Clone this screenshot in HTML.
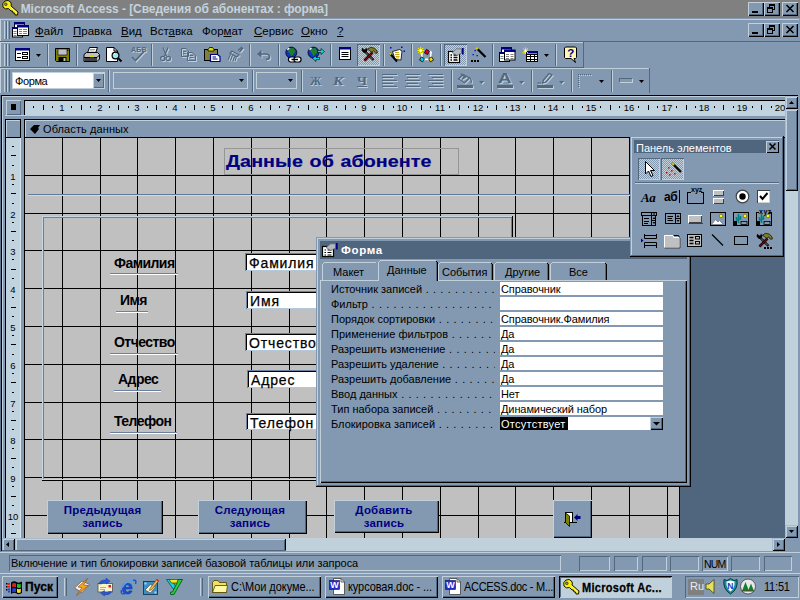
<!DOCTYPE html>
<html lang="ru"><head><meta charset="utf-8"><title>Microsoft Access</title><style>
html,body{margin:0;padding:0}
body{width:800px;height:600px;overflow:hidden;position:relative;background:#8399b1;font-family:"Liberation Sans",sans-serif;font-size:11px;color:#000}
.a{position:absolute;box-sizing:border-box;overflow:hidden}
.t{white-space:nowrap;overflow:visible;line-height:13px}
.b{font-weight:bold}
svg{position:absolute;overflow:visible}
u{text-decoration:underline}
</style></head><body>
<div class="a " style="left:0px;top:0px;width:800px;height:18px;background:#808080"></div>
<div class="a t title" style="left:20.7px;top:2px;color:#c3d3de;font-weight:bold;font-size:12px;letter-spacing:-0.06px;line-height:14px">Microsoft Access - [Сведения об абонентах : форма]</div>
<svg style="left:2px;top:0px" width="17" height="16" viewBox="0 0 17 16"><path d="M3 1 Q6.5 -0.5 8.5 2 Q10 4 9 6 L16 12 L15.5 15 L13 15 L12.5 13 L11 13 L10.5 11 L9 11 L6.5 8.5 Q3 10 1 7 Q-0.5 3.5 3 1 Z" fill="#f8f010" stroke="#101000" stroke-width="1"/><circle cx="3.8" cy="4.3" r="1.3" fill="#909090" stroke="#202000" stroke-width="0.7"/><path d="M8.5 7 L14.5 12.5" stroke="#fff8a0" stroke-width="0.8"/></svg>
<div class="a " style="left:748px;top:2px;width:16px;height:14px;background:#8399b1;box-shadow:inset 1px 1px 0 #c2d0dc,inset -1px -1px 0 #000000,inset -2px -2px 0 #52687f"></div>
<div class="a " style="left:752px;top:11px;width:6px;height:2px;background:#000"></div>
<div class="a " style="left:764px;top:2px;width:16px;height:14px;background:#8399b1;box-shadow:inset 1px 1px 0 #c2d0dc,inset -1px -1px 0 #000000,inset -2px -2px 0 #52687f"></div>
<div class="a " style="left:769px;top:4px;width:6px;height:6px;border:1px solid #000;border-top:2px solid #000"></div>
<div class="a " style="left:767px;top:7px;width:6px;height:6px;border:1px solid #000;border-top:2px solid #000;background:#8399b1"></div>
<div class="a " style="left:782px;top:2px;width:16px;height:14px;background:#8399b1;box-shadow:inset 1px 1px 0 #c2d0dc,inset -1px -1px 0 #000000,inset -2px -2px 0 #52687f"></div>
<svg style="left:786px;top:5px" width="8" height="7"><path d="M0.5 0 L7.5 7 M7.5 0 L0.5 7" stroke="#000" stroke-width="1.6" fill="none"/></svg>
<div class="a " style="left:0px;top:19px;width:799px;height:1px;background:#c2d0dc"></div>
<div class="a " style="left:0px;top:19px;width:1px;height:75px;background:#c2d0dc"></div>
<div class="a " style="left:0px;top:41px;width:800px;height:1px;background:#52687f"></div>
<div class="a " style="left:4px;top:21px;width:1px;height:18px;background:#c2d0dc"></div>
<div class="a " style="left:6px;top:21px;width:1px;height:18px;background:#52687f"></div>
<div class="a " style="left:7px;top:21px;width:1px;height:18px;background:#c2d0dc"></div>
<div class="a " style="left:9px;top:21px;width:1px;height:18px;background:#52687f"></div>
<svg style="left:12px;top:22px" width="17" height="16"><rect x="2.5" y="1" width="10" height="9" fill="#fff" stroke="#000"/><rect x="2" y="0" width="11" height="2.5" fill="#000080"/><rect x="0.5" y="6" width="10" height="9" fill="#fff" stroke="#000"/><rect x="0" y="5" width="11" height="2" fill="#000080"/><rect x="5.5" y="4" width="11" height="9.5" fill="#fff" stroke="#000"/><rect x="5" y="3" width="12" height="2.5" fill="#000080"/><path d="M7 7.5 H10 M11 7.5 H15 M7 9.5 H10 M11 9.5 H15 M7 11.5 H10 M11 11.5 H15 M1.5 9.5 H4.5 M1.5 11.5 H4.5 M1.5 13.5 H4.5" stroke="#808080" stroke-width="1"/></svg>
<div class="a t menu" style="left:35px;top:24px;font-size:11.5px;line-height:14px"><u>Ф</u>айл</div>
<div class="a t menu" style="left:73px;top:24px;font-size:11.5px;line-height:14px"><u>П</u>равка</div>
<div class="a t menu" style="left:121px;top:24px;font-size:11.5px;line-height:14px"><u>В</u>ид</div>
<div class="a t menu" style="left:150px;top:24px;font-size:11.5px;line-height:14px">Вст<u>а</u>вка</div>
<div class="a t menu" style="left:202px;top:24px;font-size:11.5px;line-height:14px">Фор<u>м</u>ат</div>
<div class="a t menu" style="left:254px;top:24px;font-size:11.5px;line-height:14px"><u>С</u>ервис</div>
<div class="a t menu" style="left:301px;top:24px;font-size:11.5px;line-height:14px"><u>О</u>кно</div>
<div class="a t menu" style="left:337px;top:24px;font-size:11.5px;line-height:14px"><u>?</u></div>
<div class="a " style="left:748px;top:23px;width:16px;height:14px;background:#8399b1;box-shadow:inset 1px 1px 0 #c2d0dc,inset -1px -1px 0 #000000,inset -2px -2px 0 #52687f"></div>
<div class="a " style="left:752px;top:32px;width:6px;height:2px;background:#000"></div>
<div class="a " style="left:764px;top:23px;width:16px;height:14px;background:#8399b1;box-shadow:inset 1px 1px 0 #c2d0dc,inset -1px -1px 0 #000000,inset -2px -2px 0 #52687f"></div>
<div class="a " style="left:769px;top:25px;width:6px;height:6px;border:1px solid #000;border-top:2px solid #000"></div>
<div class="a " style="left:767px;top:28px;width:6px;height:6px;border:1px solid #000;border-top:2px solid #000;background:#8399b1"></div>
<div class="a " style="left:782px;top:23px;width:16px;height:14px;background:#8399b1;box-shadow:inset 1px 1px 0 #c2d0dc,inset -1px -1px 0 #000000,inset -2px -2px 0 #52687f"></div>
<svg style="left:786px;top:26px" width="8" height="7"><path d="M0.5 0 L7.5 7 M7.5 0 L0.5 7" stroke="#000" stroke-width="1.6" fill="none"/></svg>
<div class="a " style="left:0px;top:42px;width:583px;height:1px;background:#c2d0dc"></div>
<div class="a " style="left:583px;top:42px;width:1px;height:26px;background:#52687f"></div>
<div class="a " style="left:0px;top:67px;width:584px;height:1px;background:#52687f"></div>
<div class="a " style="left:4px;top:44px;width:1px;height:22px;background:#c2d0dc"></div>
<div class="a " style="left:6px;top:44px;width:1px;height:22px;background:#52687f"></div>
<div class="a " style="left:7px;top:44px;width:1px;height:22px;background:#c2d0dc"></div>
<div class="a " style="left:9px;top:44px;width:1px;height:22px;background:#52687f"></div>
<div class="a " style="left:47px;top:44px;width:1px;height:22px;background:#52687f"></div>
<div class="a " style="left:48px;top:44px;width:1px;height:22px;background:#c2d0dc"></div>
<div class="a " style="left:76px;top:44px;width:1px;height:22px;background:#52687f"></div>
<div class="a " style="left:77px;top:44px;width:1px;height:22px;background:#c2d0dc"></div>
<div class="a " style="left:151px;top:44px;width:1px;height:22px;background:#52687f"></div>
<div class="a " style="left:152px;top:44px;width:1px;height:22px;background:#c2d0dc"></div>
<div class="a " style="left:249px;top:44px;width:1px;height:22px;background:#52687f"></div>
<div class="a " style="left:250px;top:44px;width:1px;height:22px;background:#c2d0dc"></div>
<div class="a " style="left:278px;top:44px;width:1px;height:22px;background:#52687f"></div>
<div class="a " style="left:279px;top:44px;width:1px;height:22px;background:#c2d0dc"></div>
<div class="a " style="left:330px;top:44px;width:1px;height:22px;background:#52687f"></div>
<div class="a " style="left:331px;top:44px;width:1px;height:22px;background:#c2d0dc"></div>
<div class="a " style="left:383px;top:44px;width:1px;height:22px;background:#52687f"></div>
<div class="a " style="left:384px;top:44px;width:1px;height:22px;background:#c2d0dc"></div>
<div class="a " style="left:411px;top:44px;width:1px;height:22px;background:#52687f"></div>
<div class="a " style="left:412px;top:44px;width:1px;height:22px;background:#c2d0dc"></div>
<div class="a " style="left:440px;top:44px;width:1px;height:22px;background:#52687f"></div>
<div class="a " style="left:441px;top:44px;width:1px;height:22px;background:#c2d0dc"></div>
<div class="a " style="left:492px;top:44px;width:1px;height:22px;background:#52687f"></div>
<div class="a " style="left:493px;top:44px;width:1px;height:22px;background:#c2d0dc"></div>
<div class="a " style="left:555px;top:44px;width:1px;height:22px;background:#52687f"></div>
<div class="a " style="left:556px;top:44px;width:1px;height:22px;background:#c2d0dc"></div>
<svg style="left:15px;top:48px" width="15" height="13"><rect x="0.5" y="0.5" width="14" height="12" fill="#fff" stroke="#000"/><rect x="0" y="0" width="15" height="2.5" fill="#000080"/><path d="M2 5.5 H6 M2 9.5 H6" stroke="#000"/><rect x="7.5" y="4.5" width="5" height="2" fill="none" stroke="#000"/><rect x="7.5" y="8.5" width="5" height="2" fill="none" stroke="#000"/></svg>
<svg style="left:36px;top:54px" width="5" height="3"><polygon points="0,0 5,0 2.5,3" fill="#000"/></svg>
<svg style="left:55px;top:48px" width="15" height="14"><path d="M0.5 0.5 H14.5 V13.5 H1.5 L0.5 12.5 Z" fill="#808000" stroke="#000"/><rect x="3" y="1" width="9" height="6" fill="#c0c0c0" stroke="#000" stroke-width="0.6"/><rect x="3.5" y="9" width="8" height="4.5" fill="#000"/><rect x="8.5" y="10" width="2" height="3" fill="#c0c0c0"/><rect x="12.3" y="1.5" width="1" height="1.5" fill="#000"/></svg>
<svg style="left:83px;top:47px" width="17" height="15"><path d="M4.5 6 L6.5 0.5 H14.5 L12.5 6 Z" fill="#fff" stroke="#000"/><path d="M1 7.5 L3.5 5.5 H14.5 L16.5 7.5 V12 L14 14.5 H1 Z" fill="#c0c0c0" stroke="#000"/><path d="M1 10.5 H14 L16.5 8" stroke="#000" fill="none"/><rect x="1.5" y="11" width="12.5" height="3" fill="#404040"/><rect x="7" y="9" width="4" height="1.2" fill="#e0e000"/><path d="M7 2.5 H12 M6.5 4 H11.5" stroke="#808080" stroke-width="0.7"/></svg>
<svg style="left:106px;top:47px" width="17" height="16"><path d="M0.5 0.5 H8 L11.5 4 V14.5 H0.5 Z" fill="#fff" stroke="#000"/><path d="M8 0.5 V4 H11.5" fill="none" stroke="#000"/><circle cx="9.5" cy="8.5" r="3.4" fill="#a0e8f0" stroke="#000" stroke-width="1.2"/><path d="M12 11 L15.5 14.5" stroke="#000" stroke-width="2"/><path d="M8 7 L9 6.4" stroke="#fff" stroke-width="1"/></svg>
<div class="a t" style="left:131px;top:46px;font-size:7px;line-height:8px;font-weight:bold;color:#52687f;text-shadow:1px 1px 0 #c2d0dc;letter-spacing:0.2px">АБВ</div>
<svg style="left:130px;top:48px" width="17" height="15"><g transform="translate(1,1)" stroke="#c2d0dc" fill="#c2d0dc" color="#c2d0dc"><path d="M2 9 L5.5 12.5 L14.5 3" fill="none" stroke="currentColor" stroke-width="1.6"/></g><g stroke="#52687f" fill="#52687f" color="#52687f"><path d="M2 9 L5.5 12.5 L14.5 3" fill="none" stroke="currentColor" stroke-width="1.6"/></g></svg>
<svg style="left:160px;top:47px" width="12" height="16"><g transform="translate(1,1)" stroke="#c2d0dc" fill="#c2d0dc" color="#c2d0dc"><path d="M3 0.5 L6.5 9 M8 0.5 L4.5 9" fill="none" stroke="currentColor" stroke-width="1.2"/><circle cx="2.8" cy="11.5" r="2.2" fill="none" stroke="currentColor" stroke-width="1.2"/><circle cx="8.2" cy="11.5" r="2.2" fill="none" stroke="currentColor" stroke-width="1.2"/></g><g stroke="#52687f" fill="#52687f" color="#52687f"><path d="M3 0.5 L6.5 9 M8 0.5 L4.5 9" fill="none" stroke="currentColor" stroke-width="1.2"/><circle cx="2.8" cy="11.5" r="2.2" fill="none" stroke="currentColor" stroke-width="1.2"/><circle cx="8.2" cy="11.5" r="2.2" fill="none" stroke="currentColor" stroke-width="1.2"/></g></svg>
<svg style="left:181px;top:48px" width="16" height="14"><g transform="translate(1,1)" stroke="#c2d0dc" fill="#c2d0dc" color="#c2d0dc"><path d="M0.5 0.5 H5 L7.5 3 V8.5 H0.5 Z M6.5 4.5 H11 L14.5 7.5 V12.5 H6.5 Z" fill="none" stroke="currentColor"/><path d="M2 3.5 H5 M2 5.5 H5 M8.5 7.5 H12 M8.5 9.5 H12.5" fill="none" stroke="currentColor" stroke-width="0.9"/></g><g stroke="#52687f" fill="#52687f" color="#52687f"><path d="M0.5 0.5 H5 L7.5 3 V8.5 H0.5 Z M6.5 4.5 H11 L14.5 7.5 V12.5 H6.5 Z" fill="none" stroke="currentColor"/><path d="M2 3.5 H5 M2 5.5 H5 M8.5 7.5 H12 M8.5 9.5 H12.5" fill="none" stroke="currentColor" stroke-width="0.9"/></g></svg>
<svg style="left:204px;top:47px" width="17" height="15"><rect x="0.5" y="2.5" width="13" height="11" fill="#808040" stroke="#000"/><path d="M4 2.5 L5.5 0.5 H8.5 L10 2.5 V4 H4 Z" fill="#e0e000" stroke="#000" stroke-width="0.8"/><path d="M6.5 7.5 H13.5 L16 9.5 V14.5 H6.5 Z" fill="#fff" stroke="#000080" stroke-width="1.2"/><path d="M8.5 10 H12 M8.5 12 H13.5" stroke="#000080" stroke-width="1"/></svg>
<svg style="left:227px;top:47px" width="17" height="16"><g transform="translate(1,1)" stroke="#c2d0dc" fill="#c2d0dc" color="#c2d0dc"><path d="M11 3.5 L14.5 0.5 L15.5 1.5 L12.5 5" fill="none" stroke="currentColor" stroke-width="1.6"/><path d="M5 4 L12 8 L9.5 10 L3 6 Z" fill="none" stroke="currentColor" stroke-width="1.2"/><path d="M3.5 7 L1 13 M5.5 8 L3.5 13.5 M7.5 9.5 L6 14 M9 10.5 L8 14" fill="none" stroke="currentColor" stroke-width="1"/></g><g stroke="#52687f" fill="#52687f" color="#52687f"><path d="M11 3.5 L14.5 0.5 L15.5 1.5 L12.5 5" fill="none" stroke="currentColor" stroke-width="1.6"/><path d="M5 4 L12 8 L9.5 10 L3 6 Z" fill="none" stroke="currentColor" stroke-width="1.2"/><path d="M3.5 7 L1 13 M5.5 8 L3.5 13.5 M7.5 9.5 L6 14 M9 10.5 L8 14" fill="none" stroke="currentColor" stroke-width="1"/></g></svg>
<svg style="left:257px;top:50px" width="15" height="11"><g transform="translate(1,1)" stroke="#c2d0dc" fill="#c2d0dc" color="#c2d0dc"><path d="M2 4 H8.5 Q12.5 4 12.5 7 Q12.5 9.5 9 9.5" fill="none" stroke="currentColor" stroke-width="1.6"/><polygon points="0,4 4.5,0 4.5,8" stroke="none"/></g><g stroke="#52687f" fill="#52687f" color="#52687f"><path d="M2 4 H8.5 Q12.5 4 12.5 7 Q12.5 9.5 9 9.5" fill="none" stroke="currentColor" stroke-width="1.6"/><polygon points="0,4 4.5,0 4.5,8" stroke="none"/></g></svg>
<svg style="left:285px;top:46px" width="17" height="17"><circle cx="6.3" cy="6.6" r="5.5" fill="#1030d0" stroke="#000" stroke-width="0.8"/><path d="M4.3 2.5999999999999996 L8.3 2.0999999999999996 L10.3 5.6 L8.3 8.6 L6.3 10.6 L4.8 7.6 L2.8 5.6 Z" fill="#208020"/><path d="M2.3 3.5999999999999996 L4.3 2.0999999999999996" stroke="#fff" stroke-width="1.4"/><rect x="3.5" y="11" width="7" height="5" rx="2.2" fill="#fff" stroke="#000" stroke-width="1.2"/><rect x="9" y="11" width="7" height="5" rx="2.2" fill="#fff" stroke="#000" stroke-width="1.2"/><path d="M6.5 13.5 H13" stroke="#000" stroke-width="1.4"/></svg>
<svg style="left:307px;top:46px" width="18" height="17"><circle cx="6.5" cy="6.6" r="5.5" fill="#1030d0" stroke="#000" stroke-width="0.8"/><path d="M4.5 2.5999999999999996 L8.5 2.0999999999999996 L10.5 5.6 L8.5 8.6 L6.5 10.6 L5.0 7.6 L3.0 5.6 Z" fill="#208020"/><path d="M2.5 3.5999999999999996 L4.5 2.0999999999999996" stroke="#fff" stroke-width="1.4"/><path d="M10.5 4.5 H14 V2.5 L17.5 5.5 L14 8.5 V6.5 H10.5 Z" fill="#00e0e8" stroke="#000" stroke-width="0.6"/><path d="M12.5 11.5 H9 V9.5 L5.5 12.5 L9 15.5 V13.5 H12.5 Z" fill="#00e0e8" stroke="#000" stroke-width="0.6"/></svg>
<svg style="left:339px;top:47px" width="12" height="13"><rect x="0.5" y="0.5" width="11" height="12" fill="#fff" stroke="#000"/><rect x="0" y="0" width="12" height="2.5" fill="#000080"/><path d="M2.5 5.5 H9.5 M2.5 7.5 H9.5 M2.5 9.5 H9.5" stroke="#000" stroke-width="1"/></svg>
<div class="a " style="left:357px;top:44px;width:23px;height:22px;background:conic-gradient(#c2d0dc 25%,#8399b1 0 50%,#c2d0dc 0 75%,#8399b1 0) 0 0/2px 2px;box-shadow:inset 1px 1px 0 #52687f,inset -1px -1px 0 #c2d0dc"></div>
<svg style="left:361px;top:47px" width="17" height="16"><path d="M3.5 4 L12.5 13" stroke="#000" stroke-width="2.4"/><path d="M4 4.5 L12 12.5" stroke="#c0c0c0" stroke-width="0.7"/><path d="M0.5 3.2 L1.3 0.8 L3 2.6 L4.6 2.2 L4.8 0.4 L6.6 2.4 L5.4 5.6 L2.6 5.8 Z" fill="#000"/><path d="M11.5 5.5 L3.5 13.5" stroke="#000" stroke-width="2.6"/><path d="M11.5 5.5 L3.5 13.5" stroke="#900000" stroke-width="1.2"/><path d="M6.5 2.2 L9.5 0.3 L13.5 1.2 L16 4 L16.3 6 L14.5 6.3 L12.8 3.8 L11 5.4 L8.5 3.6 Z" fill="#808020" stroke="#000" stroke-width="0.7"/></svg>
<svg style="left:389px;top:46px" width="17" height="17"><path d="M3.5 5.5 L10.5 3.5 L13 5 L12 14 L6 13.5 Z" fill="#fff" stroke="#000" stroke-width="0.8"/><path d="M6 6.5 H10 M6 8.5 H10.5 M6.5 10.5 H10.5 M7 12 H10" stroke="#c0a000" stroke-width="0.9"/><path d="M0.5 7 L8 15.5" stroke="#000" stroke-width="2"/><path d="M0.5 7 L2 8.7" stroke="#e0d000" stroke-width="2"/><g fill="#0000e0"><rect x="1" y="1" width="1.5" height="1.5"/><rect x="12" y="0.5" width="1.5" height="1.5"/><rect x="14.5" y="4.5" width="1.5" height="1.5"/></g></svg>
<svg style="left:417px;top:46px" width="17" height="17"><path d="M5 7 V13.5 H14 V6.5 Q14 5.5 12.5 5.5 H11" fill="none" stroke="#fff" stroke-width="1.8"/><path d="M5 7 V13.5 H14 V6.5" fill="none" stroke="#808080" stroke-width="0.5" transform="translate(0.9,0.9)"/><path d="M0.5 4.5 H7 M3.7 1 V8.5 M1.2 2 L6.2 7 M6.2 2 L1.2 7" stroke="#f8f000" stroke-width="1"/><path d="M2.5 4.5 H5 M3.7 3 V6" stroke="#fff" stroke-width="1.2"/><rect x="8.2" y="4" width="3.6" height="4" fill="#e00018" stroke="#000" stroke-width="0.7" transform="rotate(30 10 6)"/><rect x="3.2" y="11.6" width="3.6" height="3.6" fill="#00d8e8" stroke="#000" stroke-width="0.7" transform="rotate(30 5 13.4)"/><rect x="12.3" y="11.6" width="3.6" height="3.6" fill="#f0e000" stroke="#000" stroke-width="0.7" transform="rotate(-30 14.1 13.4)"/></svg>
<div class="a " style="left:444px;top:44px;width:23px;height:22px;background:conic-gradient(#c2d0dc 25%,#8399b1 0 50%,#c2d0dc 0 75%,#8399b1 0) 0 0/2px 2px;box-shadow:inset 1px 1px 0 #52687f,inset -1px -1px 0 #c2d0dc"></div>
<svg style="left:448px;top:48px" width="17" height="15"><rect x="0.5" y="3.5" width="11" height="11" fill="#fff" stroke="#000" stroke-width="1.2"/><path d="M2.5 7 H4 M5.5 7 H9.5 M2.5 9.5 H4 M5.5 9.5 H9.5 M2.5 12 H4 M5.5 12 H9.5" stroke="#000" stroke-width="1.3"/><path d="M4 4.5 L8.5 0.8 H13.5 V5 L9 7.5 Z" fill="#b0b8c0" stroke="#606060" stroke-width="0.7"/><path d="M14.8 0 V6.5" stroke="#000080" stroke-width="1.8"/></svg>
<svg style="left:470px;top:47px" width="17" height="16"><path d="M7 1.5 L15.5 10" stroke="#000" stroke-width="2.2"/><path d="M6.2 0.7 L7.8 2.3" stroke="#e0d000" stroke-width="2.2"/><g fill="#0000e0"><rect x="4.5" y="3" width="1.3" height="1.3"/><rect x="2.5" y="7" width="1.3" height="1.3"/><rect x="6.5" y="8" width="1.3" height="1.3"/></g><g fill="#000"><rect x="1" y="13" width="2" height="2"/><rect x="4" y="13" width="2" height="2"/><rect x="7" y="13" width="2" height="2"/></g></svg>
<svg style="left:499px;top:47px" width="17" height="15"><rect x="2.5" y="1" width="10" height="9" fill="#fff" stroke="#000"/><rect x="2" y="0" width="11" height="2.5" fill="#000080"/><rect x="0.5" y="6" width="10" height="8.5" fill="#fff" stroke="#000"/><rect x="0" y="5" width="11" height="2" fill="#000080"/><rect x="5.5" y="3.5" width="10.5" height="9.5" fill="#fff" stroke="#000"/><rect x="5" y="2.5" width="11.5" height="2.5" fill="#000080"/><path d="M7 7.5 H10 M11.5 7.5 H14.5 M7 9.5 H10 M11.5 9.5 H14.5 M7 11.5 H10 M11.5 11.5 H14.5 M1.5 9.5 H4.5 M1.5 11.5 H4.5" stroke="#808080" stroke-width="1"/></svg>
<svg style="left:522px;top:47px" width="17" height="15"><rect x="4.5" y="5" width="11" height="9.5" fill="#fff" stroke="#000"/><rect x="4" y="4" width="12" height="2.5" fill="#000080"/><path d="M8.5 7 V14 M12.5 7 V14 M5 9.5 H15 M5 12.5 H15 M5 7.5 H15" stroke="#000" stroke-width="1"/><path d="M0.5 5.5 L6 3 M3.5 0.5 V7 M1 1.5 L6 6 M6 1 L1.5 7" stroke="#f0e000" stroke-width="1"/><path d="M3.5 2.5 V5.5 M2 4 H5" stroke="#fff" stroke-width="1"/></svg>
<svg style="left:544px;top:54px" width="5" height="3"><polygon points="0,0 5,0 2.5,3" fill="#000"/></svg>
<svg style="left:564px;top:46px" width="14" height="18"><path d="M1.5 1 H11.5 L12.5 2 V11.5 L11.5 12.5 H10 L11.5 16.5 L7 12.5 H1.5 L0.5 11.5 V2 Z" fill="#fff8b0" stroke="#000" stroke-width="1"/><text x="3.2" y="11" font-family="Liberation Sans,sans-serif" font-weight="bold" font-size="11.5" fill="#000080" stroke="none">?</text></svg>
<div class="a " style="left:0px;top:68px;width:649px;height:1px;background:#c2d0dc"></div>
<div class="a " style="left:649px;top:68px;width:1px;height:26px;background:#52687f"></div>
<div class="a " style="left:0px;top:93px;width:650px;height:1px;background:#52687f"></div>
<div class="a " style="left:0px;top:94px;width:800px;height:1px;background:#52687f"></div>
<div class="a " style="left:4px;top:70px;width:1px;height:22px;background:#c2d0dc"></div>
<div class="a " style="left:6px;top:70px;width:1px;height:22px;background:#52687f"></div>
<div class="a " style="left:7px;top:70px;width:1px;height:22px;background:#c2d0dc"></div>
<div class="a " style="left:9px;top:70px;width:1px;height:22px;background:#52687f"></div>
<div class="a " style="left:12px;top:72px;width:93px;height:17px;background:#fff;border:1px solid #c2d0dc"></div>
<div class="a " style="left:93px;top:73px;width:11px;height:15px;background:#8399b1;box-shadow:inset 1px 1px 0 #c2d0dc,inset -1px -1px 0 #52687f"></div>
<svg style="left:96px;top:79px" width="5" height="3"><polygon points="0,0 5,0 2.5,3" fill="#000"/></svg>
<div class="a t cmb" style="left:15px;top:74px;font-size:11px;line-height:14px;letter-spacing:-0.4px">Форма</div>
<div class="a " style="left:108px;top:70px;width:1px;height:22px;background:#52687f"></div>
<div class="a " style="left:109px;top:70px;width:1px;height:22px;background:#c2d0dc"></div>
<div class="a " style="left:252px;top:70px;width:1px;height:22px;background:#52687f"></div>
<div class="a " style="left:253px;top:70px;width:1px;height:22px;background:#c2d0dc"></div>
<div class="a " style="left:301px;top:70px;width:1px;height:22px;background:#52687f"></div>
<div class="a " style="left:302px;top:70px;width:1px;height:22px;background:#c2d0dc"></div>
<div class="a " style="left:375px;top:70px;width:1px;height:22px;background:#52687f"></div>
<div class="a " style="left:376px;top:70px;width:1px;height:22px;background:#c2d0dc"></div>
<div class="a " style="left:451px;top:70px;width:1px;height:22px;background:#52687f"></div>
<div class="a " style="left:452px;top:70px;width:1px;height:22px;background:#c2d0dc"></div>
<div class="a " style="left:491px;top:70px;width:1px;height:22px;background:#52687f"></div>
<div class="a " style="left:492px;top:70px;width:1px;height:22px;background:#c2d0dc"></div>
<div class="a " style="left:531px;top:70px;width:1px;height:22px;background:#52687f"></div>
<div class="a " style="left:532px;top:70px;width:1px;height:22px;background:#c2d0dc"></div>
<div class="a " style="left:571px;top:70px;width:1px;height:22px;background:#52687f"></div>
<div class="a " style="left:572px;top:70px;width:1px;height:22px;background:#c2d0dc"></div>
<div class="a " style="left:611px;top:70px;width:1px;height:22px;background:#52687f"></div>
<div class="a " style="left:612px;top:70px;width:1px;height:22px;background:#c2d0dc"></div>
<div class="a " style="left:113px;top:72px;width:135px;height:17px;border:1px solid #c2d0dc"></div>
<svg style="left:239px;top:79px" width="5" height="3"><polygon points="0,0 5,0 2.5,3" fill="#000"/></svg>
<div class="a " style="left:256px;top:72px;width:41px;height:17px;border:1px solid #c2d0dc"></div>
<svg style="left:288px;top:79px" width="5" height="3"><polygon points="0,0 5,0 2.5,3" fill="#000"/></svg>
<div class="a t" style="left:310px;top:74px;font-family:'Liberation Serif',serif;font-size:13.5px;line-height:14px;font-weight:bold;color:#52687f;text-shadow:1px 1px 0 #c2d0dc;letter-spacing:-1px;transform:scaleX(0.85);transform-origin:0 0">Ж</div>
<div class="a t" style="left:333px;top:74px;font-family:'Liberation Serif',serif;font-size:13.5px;line-height:14px;font-weight:bold;color:#52687f;text-shadow:1px 1px 0 #c2d0dc;font-style:italic;transform:scaleX(1.15);transform-origin:0 0">К</div>
<div class="a t" style="left:357px;top:74px;font-family:'Liberation Serif',serif;font-size:13.5px;line-height:14px;font-weight:bold;color:#52687f;text-shadow:1px 1px 0 #c2d0dc;">Ч</div>
<div class="a " style="left:357px;top:86px;width:10px;height:1px;background:#52687f"></div>
<div class="a " style="left:358px;top:87px;width:10px;height:1px;background:#c2d0dc"></div>
<svg style="left:382px;top:74px" width="16" height="14"><g transform="translate(1,1)" stroke="#c2d0dc" fill="#c2d0dc" color="#c2d0dc"><rect x="0" y="0" width="15" height="1" stroke="none"/><rect x="0" y="3" width="11" height="1" stroke="none"/><rect x="0" y="6" width="15" height="1" stroke="none"/><rect x="0" y="9" width="11" height="1" stroke="none"/><rect x="0" y="12" width="15" height="1" stroke="none"/></g><g stroke="#52687f" fill="#52687f" color="#52687f"><rect x="0" y="0" width="15" height="1" stroke="none"/><rect x="0" y="3" width="11" height="1" stroke="none"/><rect x="0" y="6" width="15" height="1" stroke="none"/><rect x="0" y="9" width="11" height="1" stroke="none"/><rect x="0" y="12" width="15" height="1" stroke="none"/></g></svg>
<svg style="left:405px;top:74px" width="16" height="14"><g transform="translate(1,1)" stroke="#c2d0dc" fill="#c2d0dc" color="#c2d0dc"><rect x="0.0" y="0" width="15" height="1" stroke="none"/><rect x="2.0" y="3" width="11" height="1" stroke="none"/><rect x="0.0" y="6" width="15" height="1" stroke="none"/><rect x="2.0" y="9" width="11" height="1" stroke="none"/><rect x="0.0" y="12" width="15" height="1" stroke="none"/></g><g stroke="#52687f" fill="#52687f" color="#52687f"><rect x="0.0" y="0" width="15" height="1" stroke="none"/><rect x="2.0" y="3" width="11" height="1" stroke="none"/><rect x="0.0" y="6" width="15" height="1" stroke="none"/><rect x="2.0" y="9" width="11" height="1" stroke="none"/><rect x="0.0" y="12" width="15" height="1" stroke="none"/></g></svg>
<svg style="left:428px;top:74px" width="16" height="14"><g transform="translate(1,1)" stroke="#c2d0dc" fill="#c2d0dc" color="#c2d0dc"><rect x="0" y="0" width="15" height="1" stroke="none"/><rect x="4" y="3" width="11" height="1" stroke="none"/><rect x="0" y="6" width="15" height="1" stroke="none"/><rect x="4" y="9" width="11" height="1" stroke="none"/><rect x="0" y="12" width="15" height="1" stroke="none"/></g><g stroke="#52687f" fill="#52687f" color="#52687f"><rect x="0" y="0" width="15" height="1" stroke="none"/><rect x="4" y="3" width="11" height="1" stroke="none"/><rect x="0" y="6" width="15" height="1" stroke="none"/><rect x="4" y="9" width="11" height="1" stroke="none"/><rect x="0" y="12" width="15" height="1" stroke="none"/></g></svg>
<svg style="left:457px;top:73px" width="17" height="12"><g transform="translate(1,1)" stroke="#c2d0dc" fill="#c2d0dc" color="#c2d0dc"><path d="M6 1.5 L12.5 5 L7.5 10 L1.5 6 Z" fill="none" stroke="currentColor" stroke-width="1.3"/><path d="M4 0.5 L8 4.5 M12.5 5 Q15 6.5 14 10" fill="none" stroke="currentColor" stroke-width="1.2"/><path d="M5 6 L9 3.5" fill="none" stroke="currentColor" stroke-width="1.5"/></g><g stroke="#52687f" fill="#52687f" color="#52687f"><path d="M6 1.5 L12.5 5 L7.5 10 L1.5 6 Z" fill="none" stroke="currentColor" stroke-width="1.3"/><path d="M4 0.5 L8 4.5 M12.5 5 Q15 6.5 14 10" fill="none" stroke="currentColor" stroke-width="1.2"/><path d="M5 6 L9 3.5" fill="none" stroke="currentColor" stroke-width="1.5"/></g></svg>
<div class="a " style="left:457px;top:85px;width:16px;height:3px;background:#52687f"></div>
<div class="a " style="left:458px;top:88px;width:16px;height:1px;background:#c2d0dc"></div>
<div class="a " style="left:473px;top:86px;width:1px;height:3px;background:#c2d0dc"></div>
<svg style="left:479px;top:81px" width="6" height="4"><g transform="translate(1,1)" stroke="#c2d0dc" fill="#c2d0dc" color="#c2d0dc"><polygon points="0,0 5,0 2.5,3" stroke="none"/></g><g stroke="#52687f" fill="#52687f" color="#52687f"><polygon points="0,0 5,0 2.5,3" stroke="none"/></g></svg>
<div class="a t" style="left:498px;top:70px;font-size:15px;line-height:16px;font-weight:bold;color:#52687f;text-shadow:1px 1px 0 #c2d0dc;transform:scaleX(1.25);transform-origin:0 0">A</div>
<div class="a " style="left:497px;top:85px;width:16px;height:3px;background:#52687f"></div>
<div class="a " style="left:498px;top:88px;width:16px;height:1px;background:#c2d0dc"></div>
<div class="a " style="left:513px;top:86px;width:1px;height:3px;background:#c2d0dc"></div>
<svg style="left:519px;top:81px" width="6" height="4"><g transform="translate(1,1)" stroke="#c2d0dc" fill="#c2d0dc" color="#c2d0dc"><polygon points="0,0 5,0 2.5,3" stroke="none"/></g><g stroke="#52687f" fill="#52687f" color="#52687f"><polygon points="0,0 5,0 2.5,3" stroke="none"/></g></svg>
<svg style="left:537px;top:73px" width="17" height="12"><g transform="translate(1,1)" stroke="#c2d0dc" fill="#c2d0dc" color="#c2d0dc"><path d="M12 0.5 L15 2 L9 9 L5.5 10 L6.5 7 Z" fill="none" stroke="currentColor" stroke-width="1.3"/><path d="M0.5 10 H4" stroke="currentColor" stroke-width="1.2" fill="none"/></g><g stroke="#52687f" fill="#52687f" color="#52687f"><path d="M12 0.5 L15 2 L9 9 L5.5 10 L6.5 7 Z" fill="none" stroke="currentColor" stroke-width="1.3"/><path d="M0.5 10 H4" stroke="currentColor" stroke-width="1.2" fill="none"/></g></svg>
<div class="a " style="left:537px;top:85px;width:16px;height:3px;background:#52687f"></div>
<div class="a " style="left:538px;top:88px;width:16px;height:1px;background:#c2d0dc"></div>
<div class="a " style="left:553px;top:86px;width:1px;height:3px;background:#c2d0dc"></div>
<svg style="left:559px;top:81px" width="6" height="4"><g transform="translate(1,1)" stroke="#c2d0dc" fill="#c2d0dc" color="#c2d0dc"><polygon points="0,0 5,0 2.5,3" stroke="none"/></g><g stroke="#52687f" fill="#52687f" color="#52687f"><polygon points="0,0 5,0 2.5,3" stroke="none"/></g></svg>
<svg style="left:578px;top:74px" width="15" height="14"><g transform="translate(1,1)" stroke="#c2d0dc" fill="#c2d0dc" color="#c2d0dc"><path d="M0 0.5 H14" fill="none" stroke="currentColor" stroke-dasharray="1 1" shape-rendering="crispEdges"/><path d="M0.5 0 V14" fill="none" stroke="currentColor" stroke-dasharray="1 1" shape-rendering="crispEdges"/></g><g stroke="#52687f" fill="#52687f" color="#52687f"><path d="M0 0.5 H14" fill="none" stroke="currentColor" stroke-dasharray="1 1" shape-rendering="crispEdges"/><path d="M0.5 0 V14" fill="none" stroke="currentColor" stroke-dasharray="1 1" shape-rendering="crispEdges"/></g></svg>
<svg style="left:599px;top:80px" width="5" height="3"><polygon points="0,0 5,0 2.5,3" fill="#000"/></svg>
<div class="a " style="left:619px;top:78px;width:14px;height:5px;box-shadow:inset 1px 1px 0 #52687f,inset -1px -1px 0 #c2d0dc;background:#8399b1"></div>
<div class="a " style="left:619px;top:78px;width:14px;height:5px;border:1px solid #c2d0dc;border-top-color:#52687f;border-left-color:#52687f"></div>
<svg style="left:639px;top:80px" width="5" height="3"><polygon points="0,0 5,0 2.5,3" fill="#000"/></svg>
<div class="a " style="left:0px;top:93px;width:800px;height:460px;background:#8399b1"></div>
<div class="a " style="left:1px;top:95px;width:797px;height:1px;background:#000"></div>
<div class="a " style="left:1px;top:95px;width:1px;height:456px;background:#000"></div>
<div class="a " style="left:2px;top:96px;width:795px;height:1px;background:#c2d0dc"></div>
<div class="a " style="left:2px;top:96px;width:1px;height:455px;background:#c2d0dc"></div>
<div class="a " style="left:0px;top:552px;width:800px;height:1px;background:#c2d0dc"></div>
<div class="a " style="left:0px;top:95px;width:1px;height:457px;background:#607890"></div>
<div class="a " style="left:6px;top:100px;width:15px;height:15px;background:#8399b1;box-shadow:inset 1px 1px 0 #c2d0dc,inset -1px -1px 0 #52687f"></div>
<div class="a " style="left:11px;top:104px;width:5px;height:6px;background:#000"></div>
<div class="a " style="left:5px;top:115px;width:780px;height:1px;background:#c2d0dc"></div>
<div class="a " style="left:25px;top:101px;width:760px;height:14px;background:#c1d3df"></div>
<div class="a " style="left:24px;top:100px;width:761px;height:1px;background:#000"></div>
<div class="a " style="left:24px;top:100px;width:1px;height:15px;background:#000"></div>
<div class="a " style="left:33px;top:106px;width:1px;height:2px;background:#000"></div>
<div class="a " style="left:43px;top:105px;width:1px;height:5px;background:#000"></div>
<div class="a " style="left:52px;top:106px;width:1px;height:2px;background:#000"></div>
<div class="a t " style="left:59px;top:102px;font-size:9.5px;width:6px;text-align:center;line-height:11px">1</div>
<div class="a " style="left:71px;top:106px;width:1px;height:2px;background:#000"></div>
<div class="a " style="left:81px;top:105px;width:1px;height:5px;background:#000"></div>
<div class="a " style="left:90px;top:106px;width:1px;height:2px;background:#000"></div>
<div class="a t " style="left:97px;top:102px;font-size:9.5px;width:6px;text-align:center;line-height:11px">2</div>
<div class="a " style="left:109px;top:106px;width:1px;height:2px;background:#000"></div>
<div class="a " style="left:118px;top:105px;width:1px;height:5px;background:#000"></div>
<div class="a " style="left:128px;top:106px;width:1px;height:2px;background:#000"></div>
<div class="a t " style="left:134px;top:102px;font-size:9.5px;width:6px;text-align:center;line-height:11px">3</div>
<div class="a " style="left:147px;top:106px;width:1px;height:2px;background:#000"></div>
<div class="a " style="left:156px;top:105px;width:1px;height:5px;background:#000"></div>
<div class="a " style="left:166px;top:106px;width:1px;height:2px;background:#000"></div>
<div class="a t " style="left:172px;top:102px;font-size:9.5px;width:6px;text-align:center;line-height:11px">4</div>
<div class="a " style="left:185px;top:106px;width:1px;height:2px;background:#000"></div>
<div class="a " style="left:194px;top:105px;width:1px;height:5px;background:#000"></div>
<div class="a " style="left:204px;top:106px;width:1px;height:2px;background:#000"></div>
<div class="a t " style="left:210px;top:102px;font-size:9.5px;width:6px;text-align:center;line-height:11px">5</div>
<div class="a " style="left:222px;top:106px;width:1px;height:2px;background:#000"></div>
<div class="a " style="left:232px;top:105px;width:1px;height:5px;background:#000"></div>
<div class="a " style="left:241px;top:106px;width:1px;height:2px;background:#000"></div>
<div class="a t " style="left:248px;top:102px;font-size:9.5px;width:6px;text-align:center;line-height:11px">6</div>
<div class="a " style="left:260px;top:106px;width:1px;height:2px;background:#000"></div>
<div class="a " style="left:270px;top:105px;width:1px;height:5px;background:#000"></div>
<div class="a " style="left:279px;top:106px;width:1px;height:2px;background:#000"></div>
<div class="a t " style="left:286px;top:102px;font-size:9.5px;width:6px;text-align:center;line-height:11px">7</div>
<div class="a " style="left:298px;top:106px;width:1px;height:2px;background:#000"></div>
<div class="a " style="left:308px;top:105px;width:1px;height:5px;background:#000"></div>
<div class="a " style="left:317px;top:106px;width:1px;height:2px;background:#000"></div>
<div class="a t " style="left:323px;top:102px;font-size:9.5px;width:6px;text-align:center;line-height:11px">8</div>
<div class="a " style="left:336px;top:106px;width:1px;height:2px;background:#000"></div>
<div class="a " style="left:345px;top:105px;width:1px;height:5px;background:#000"></div>
<div class="a " style="left:355px;top:106px;width:1px;height:2px;background:#000"></div>
<div class="a t " style="left:361px;top:102px;font-size:9.5px;width:6px;text-align:center;line-height:11px">9</div>
<div class="a " style="left:374px;top:106px;width:1px;height:2px;background:#000"></div>
<div class="a " style="left:383px;top:105px;width:1px;height:5px;background:#000"></div>
<div class="a " style="left:393px;top:106px;width:1px;height:2px;background:#000"></div>
<div class="a t " style="left:396px;top:102px;font-size:9.5px;width:12px;text-align:center;line-height:11px">10</div>
<div class="a " style="left:411px;top:106px;width:1px;height:2px;background:#000"></div>
<div class="a " style="left:421px;top:105px;width:1px;height:5px;background:#000"></div>
<div class="a " style="left:430px;top:106px;width:1px;height:2px;background:#000"></div>
<div class="a t " style="left:434px;top:102px;font-size:9.5px;width:12px;text-align:center;line-height:11px">11</div>
<div class="a " style="left:449px;top:106px;width:1px;height:2px;background:#000"></div>
<div class="a " style="left:459px;top:105px;width:1px;height:5px;background:#000"></div>
<div class="a " style="left:468px;top:106px;width:1px;height:2px;background:#000"></div>
<div class="a t " style="left:472px;top:102px;font-size:9.5px;width:12px;text-align:center;line-height:11px">12</div>
<div class="a " style="left:487px;top:106px;width:1px;height:2px;background:#000"></div>
<div class="a " style="left:496px;top:105px;width:1px;height:5px;background:#000"></div>
<div class="a " style="left:506px;top:106px;width:1px;height:2px;background:#000"></div>
<div class="a t " style="left:509px;top:102px;font-size:9.5px;width:12px;text-align:center;line-height:11px">13</div>
<div class="a " style="left:525px;top:106px;width:1px;height:2px;background:#000"></div>
<div class="a " style="left:534px;top:105px;width:1px;height:5px;background:#000"></div>
<div class="a " style="left:544px;top:106px;width:1px;height:2px;background:#000"></div>
<div class="a t " style="left:547px;top:102px;font-size:9.5px;width:12px;text-align:center;line-height:11px">14</div>
<div class="a " style="left:563px;top:106px;width:1px;height:2px;background:#000"></div>
<div class="a " style="left:572px;top:105px;width:1px;height:5px;background:#000"></div>
<div class="a " style="left:582px;top:106px;width:1px;height:2px;background:#000"></div>
<div class="a t " style="left:585px;top:102px;font-size:9.5px;width:12px;text-align:center;line-height:11px">15</div>
<div class="a " style="left:600px;top:106px;width:1px;height:2px;background:#000"></div>
<div class="a " style="left:610px;top:105px;width:1px;height:5px;background:#000"></div>
<div class="a " style="left:619px;top:106px;width:1px;height:2px;background:#000"></div>
<div class="a t " style="left:623px;top:102px;font-size:9.5px;width:12px;text-align:center;line-height:11px">16</div>
<div class="a " style="left:638px;top:106px;width:1px;height:2px;background:#000"></div>
<div class="a " style="left:648px;top:105px;width:1px;height:5px;background:#000"></div>
<div class="a " style="left:657px;top:106px;width:1px;height:2px;background:#000"></div>
<div class="a t " style="left:661px;top:102px;font-size:9.5px;width:12px;text-align:center;line-height:11px">17</div>
<div class="a " style="left:676px;top:106px;width:1px;height:2px;background:#000"></div>
<div class="a " style="left:686px;top:105px;width:1px;height:5px;background:#000"></div>
<div class="a " style="left:695px;top:106px;width:1px;height:2px;background:#000"></div>
<div class="a t " style="left:698px;top:102px;font-size:9.5px;width:12px;text-align:center;line-height:11px">18</div>
<div class="a " style="left:714px;top:106px;width:1px;height:2px;background:#000"></div>
<div class="a " style="left:723px;top:105px;width:1px;height:5px;background:#000"></div>
<div class="a " style="left:733px;top:106px;width:1px;height:2px;background:#000"></div>
<div class="a t " style="left:736px;top:102px;font-size:9.5px;width:12px;text-align:center;line-height:11px">19</div>
<div class="a " style="left:752px;top:106px;width:1px;height:2px;background:#000"></div>
<div class="a " style="left:761px;top:105px;width:1px;height:5px;background:#000"></div>
<div class="a " style="left:771px;top:106px;width:1px;height:2px;background:#000"></div>
<div class="a t " style="left:774px;top:102px;font-size:9.5px;width:12px;text-align:center;line-height:11px">20</div>
<div class="a " style="left:6px;top:120px;width:14px;height:17px;background:#8399b1;box-shadow:inset 1px 1px 0 #c2d0dc"></div>
<div class="a " style="left:6px;top:119px;width:15px;height:1px;background:#000"></div>
<div class="a " style="left:24px;top:119px;width:761px;height:1px;background:#000"></div>
<div class="a " style="left:20px;top:119px;width:1px;height:19px;background:#000"></div>
<div class="a " style="left:6px;top:137px;width:15px;height:1px;background:#000"></div>
<div class="a " style="left:6px;top:138px;width:14px;height:400px;background:#c1d3df"></div>
<div class="a " style="left:20px;top:138px;width:1px;height:400px;background:#dbe6ee"></div>
<div class="a " style="left:5px;top:119px;width:1px;height:419px;background:#000"></div>
<div class="a " style="left:12px;top:146px;width:2px;height:1px;background:#000"></div>
<div class="a " style="left:11px;top:155px;width:5px;height:1px;background:#000"></div>
<div class="a " style="left:12px;top:165px;width:2px;height:1px;background:#000"></div>
<div class="a t " style="left:6px;top:171px;font-size:9.5px;width:14px;text-align:center;line-height:11px">1</div>
<div class="a " style="left:12px;top:184px;width:2px;height:1px;background:#000"></div>
<div class="a " style="left:11px;top:193px;width:5px;height:1px;background:#000"></div>
<div class="a " style="left:12px;top:203px;width:2px;height:1px;background:#000"></div>
<div class="a t " style="left:6px;top:209px;font-size:9.5px;width:14px;text-align:center;line-height:11px">2</div>
<div class="a " style="left:12px;top:222px;width:2px;height:1px;background:#000"></div>
<div class="a " style="left:11px;top:231px;width:5px;height:1px;background:#000"></div>
<div class="a " style="left:12px;top:240px;width:2px;height:1px;background:#000"></div>
<div class="a t " style="left:6px;top:246px;font-size:9.5px;width:14px;text-align:center;line-height:11px">3</div>
<div class="a " style="left:12px;top:259px;width:2px;height:1px;background:#000"></div>
<div class="a " style="left:11px;top:269px;width:5px;height:1px;background:#000"></div>
<div class="a " style="left:12px;top:278px;width:2px;height:1px;background:#000"></div>
<div class="a t " style="left:6px;top:284px;font-size:9.5px;width:14px;text-align:center;line-height:11px">4</div>
<div class="a " style="left:12px;top:297px;width:2px;height:1px;background:#000"></div>
<div class="a " style="left:11px;top:307px;width:5px;height:1px;background:#000"></div>
<div class="a " style="left:12px;top:316px;width:2px;height:1px;background:#000"></div>
<div class="a t " style="left:6px;top:322px;font-size:9.5px;width:14px;text-align:center;line-height:11px">5</div>
<div class="a " style="left:12px;top:335px;width:2px;height:1px;background:#000"></div>
<div class="a " style="left:11px;top:344px;width:5px;height:1px;background:#000"></div>
<div class="a " style="left:12px;top:354px;width:2px;height:1px;background:#000"></div>
<div class="a t " style="left:6px;top:360px;font-size:9.5px;width:14px;text-align:center;line-height:11px">6</div>
<div class="a " style="left:12px;top:373px;width:2px;height:1px;background:#000"></div>
<div class="a " style="left:11px;top:382px;width:5px;height:1px;background:#000"></div>
<div class="a " style="left:12px;top:392px;width:2px;height:1px;background:#000"></div>
<div class="a t " style="left:6px;top:398px;font-size:9.5px;width:14px;text-align:center;line-height:11px">7</div>
<div class="a " style="left:12px;top:411px;width:2px;height:1px;background:#000"></div>
<div class="a " style="left:11px;top:420px;width:5px;height:1px;background:#000"></div>
<div class="a " style="left:12px;top:429px;width:2px;height:1px;background:#000"></div>
<div class="a t " style="left:6px;top:435px;font-size:9.5px;width:14px;text-align:center;line-height:11px">8</div>
<div class="a " style="left:12px;top:448px;width:2px;height:1px;background:#000"></div>
<div class="a " style="left:11px;top:458px;width:5px;height:1px;background:#000"></div>
<div class="a " style="left:12px;top:467px;width:2px;height:1px;background:#000"></div>
<div class="a t " style="left:6px;top:473px;font-size:9.5px;width:14px;text-align:center;line-height:11px">9</div>
<div class="a " style="left:12px;top:486px;width:2px;height:1px;background:#000"></div>
<div class="a " style="left:11px;top:496px;width:5px;height:1px;background:#000"></div>
<div class="a " style="left:12px;top:505px;width:2px;height:1px;background:#000"></div>
<div class="a t " style="left:6px;top:511px;font-size:9.5px;width:14px;text-align:center;line-height:11px">10</div>
<div class="a " style="left:12px;top:524px;width:2px;height:1px;background:#000"></div>
<div class="a " style="left:11px;top:533px;width:5px;height:1px;background:#000"></div>
<div class="a " style="left:25px;top:120px;width:760px;height:17px;background:#8399b1"></div>
<div class="a " style="left:24px;top:119px;width:1px;height:419px;background:#000"></div>
<div class="a " style="left:25px;top:120px;width:760px;height:1px;background:#c2d0dc"></div>
<div class="a " style="left:25px;top:120px;width:1px;height:17px;background:#c2d0dc"></div>
<div class="a " style="left:25px;top:137px;width:760px;height:1px;background:#000"></div>
<div class="a t " style="left:43px;top:123px;font-size:11px;letter-spacing:0.1px">Область данных</div>
<svg style="left:30px;top:125px" width="10" height="9"><path d="M4 0 L10 0 L8 3 L9 4 L5 9 L0 4 Z" fill="#000"/></svg>
<div class="a " style="left:25px;top:138px;width:760px;height:400px;background:#50667e"></div>
<div class="a " style="left:25px;top:138px;width:655px;height:400px;background:#c0c0c0"></div>
<div class="a " style="left:679px;top:138px;width:1px;height:400px;background:#000"></div>
<div class="a " style="left:62px;top:138px;width:1px;height:400px;background:#000"></div>
<div class="a " style="left:100px;top:138px;width:1px;height:400px;background:#000"></div>
<div class="a " style="left:137px;top:138px;width:1px;height:400px;background:#000"></div>
<div class="a " style="left:175px;top:138px;width:1px;height:400px;background:#000"></div>
<div class="a " style="left:213px;top:138px;width:1px;height:400px;background:#000"></div>
<div class="a " style="left:251px;top:138px;width:1px;height:400px;background:#000"></div>
<div class="a " style="left:289px;top:138px;width:1px;height:400px;background:#000"></div>
<div class="a " style="left:326px;top:138px;width:1px;height:400px;background:#000"></div>
<div class="a " style="left:364px;top:138px;width:1px;height:400px;background:#000"></div>
<div class="a " style="left:402px;top:138px;width:1px;height:400px;background:#000"></div>
<div class="a " style="left:440px;top:138px;width:1px;height:400px;background:#000"></div>
<div class="a " style="left:478px;top:138px;width:1px;height:400px;background:#000"></div>
<div class="a " style="left:515px;top:138px;width:1px;height:400px;background:#000"></div>
<div class="a " style="left:553px;top:138px;width:1px;height:400px;background:#000"></div>
<div class="a " style="left:591px;top:138px;width:1px;height:400px;background:#000"></div>
<div class="a " style="left:629px;top:138px;width:1px;height:400px;background:#000"></div>
<div class="a " style="left:667px;top:138px;width:1px;height:400px;background:#000"></div>
<div class="a " style="left:25px;top:175px;width:655px;height:1px;background:#000"></div>
<div class="a " style="left:25px;top:213px;width:655px;height:1px;background:#000"></div>
<div class="a " style="left:25px;top:250px;width:655px;height:1px;background:#000"></div>
<div class="a " style="left:25px;top:288px;width:655px;height:1px;background:#000"></div>
<div class="a " style="left:25px;top:326px;width:655px;height:1px;background:#000"></div>
<div class="a " style="left:25px;top:364px;width:655px;height:1px;background:#000"></div>
<div class="a " style="left:25px;top:402px;width:655px;height:1px;background:#000"></div>
<div class="a " style="left:25px;top:439px;width:655px;height:1px;background:#000"></div>
<div class="a " style="left:25px;top:477px;width:655px;height:1px;background:#000"></div>
<div class="a " style="left:25px;top:515px;width:655px;height:1px;background:#000"></div>
<div class="a " style="left:224px;top:148px;width:235px;height:27px;border:1px solid #959595"></div>
<div class="a t ttl" style="left:226px;top:151px;font-size:16.5px;font-weight:bold;color:#000080;line-height:20px;letter-spacing:0.1px;transform:scaleX(1.19);word-spacing:0.8px;transform-origin:0 0;-webkit-text-stroke:0.2px #000080">Данные об абоненте</div>
<div class="a " style="left:28px;top:194px;width:652px;height:1px;background:#5f7a9c"></div>
<div class="a " style="left:28px;top:195px;width:652px;height:1px;background:#c8dcea"></div>
<div class="a " style="left:42px;top:216px;width:470px;height:1px;background:#c4d6e4"></div>
<div class="a " style="left:43px;top:217px;width:468px;height:1px;background:#6a82a0"></div>
<div class="a " style="left:42px;top:216px;width:1px;height:264px;background:#c4d6e4"></div>
<div class="a " style="left:43px;top:217px;width:1px;height:262px;background:#6a82a0"></div>
<div class="a " style="left:42px;top:479px;width:470px;height:1px;background:#c4d6e4"></div>
<div class="a " style="left:42px;top:480px;width:471px;height:1px;background:#000"></div>
<div class="a " style="left:511px;top:217px;width:1px;height:263px;background:#6a82a0"></div>
<div class="a " style="left:512px;top:216px;width:1px;height:265px;background:#000"></div>
<div class="a t lbl" style="left:114px;top:256px;font-size:14px;font-weight:bold;line-height:15px;letter-spacing:-0.55px">Фамилия</div>
<div class="a " style="left:110px;top:273px;width:68px;height:1px;background:#6a82a0"></div>
<div class="a " style="left:110px;top:274px;width:68px;height:1px;background:#fff"></div>
<div class="a t lbl" style="left:120px;top:293px;font-size:14px;font-weight:bold;line-height:15px;letter-spacing:-0.55px">Имя</div>
<div class="a " style="left:116px;top:311px;width:32px;height:1px;background:#6a82a0"></div>
<div class="a " style="left:116px;top:312px;width:32px;height:1px;background:#fff"></div>
<div class="a t lbl" style="left:114px;top:335px;font-size:14px;font-weight:bold;line-height:15px;letter-spacing:-0.55px">Отчество</div>
<div class="a " style="left:110px;top:353px;width:68px;height:1px;background:#6a82a0"></div>
<div class="a " style="left:110px;top:354px;width:68px;height:1px;background:#fff"></div>
<div class="a t lbl" style="left:118px;top:372px;font-size:14px;font-weight:bold;line-height:15px;letter-spacing:-0.55px">Адрес</div>
<div class="a " style="left:114px;top:390px;width:47px;height:1px;background:#6a82a0"></div>
<div class="a " style="left:114px;top:391px;width:47px;height:1px;background:#fff"></div>
<div class="a t lbl" style="left:114px;top:414px;font-size:14px;font-weight:bold;line-height:15px;letter-spacing:-0.55px">Телефон</div>
<div class="a " style="left:110px;top:432px;width:67px;height:1px;background:#6a82a0"></div>
<div class="a " style="left:110px;top:433px;width:67px;height:1px;background:#fff"></div>
<div class="a " style="left:245px;top:253px;width:80px;height:18px;background:#fff;box-shadow:inset 1px 1px 0 #6a82a0,inset 0 -1px 0 #b4c8dc,inset 2px 2px 0 #000"></div>
<div class="a t tb" style="left:249px;top:255.5px;font-size:14px;line-height:15px;letter-spacing:0.85px;-webkit-text-stroke:0.25px #000">Фамилия</div>
<div class="a " style="left:246px;top:291px;width:80px;height:18px;background:#fff;box-shadow:inset 1px 1px 0 #6a82a0,inset 0 -1px 0 #b4c8dc,inset 2px 2px 0 #000"></div>
<div class="a t tb" style="left:250px;top:293.5px;font-size:14px;line-height:15px;letter-spacing:0.85px;-webkit-text-stroke:0.25px #000">Имя</div>
<div class="a " style="left:245px;top:333px;width:80px;height:18px;background:#fff;box-shadow:inset 1px 1px 0 #6a82a0,inset 0 -1px 0 #b4c8dc,inset 2px 2px 0 #000"></div>
<div class="a t tb" style="left:249px;top:335.5px;font-size:14px;line-height:15px;letter-spacing:0.85px;-webkit-text-stroke:0.25px #000">Отчество</div>
<div class="a " style="left:247px;top:370px;width:80px;height:18px;background:#fff;box-shadow:inset 1px 1px 0 #6a82a0,inset 0 -1px 0 #b4c8dc,inset 2px 2px 0 #000"></div>
<div class="a t tb" style="left:251px;top:372.5px;font-size:14px;line-height:15px;letter-spacing:0.85px;-webkit-text-stroke:0.25px #000">Адрес</div>
<div class="a " style="left:246px;top:413px;width:80px;height:17px;background:#fff;box-shadow:inset 1px 1px 0 #6a82a0,inset 0 -1px 0 #b4c8dc,inset 2px 2px 0 #000"></div>
<div class="a t tb" style="left:250px;top:415.5px;font-size:14px;line-height:15px;letter-spacing:0.85px;-webkit-text-stroke:0.25px #000">Телефон</div>
<div class="a " style="left:47px;top:500px;width:116px;height:34px;background:#8399b1;box-shadow:inset 1px 1px 0 #c2d0dc,inset -1px -1px 0 #000,inset -2px -2px 0 #52687f"></div>
<div class="a t cmd" style="left:47px;top:504px;width:111px;text-align:center;font-weight:bold;color:#000080;font-size:11.5px;letter-spacing:0.2px">Предыдущая</div>
<div class="a t cmd" style="left:47px;top:517px;width:111px;text-align:center;font-weight:bold;color:#000080;font-size:11.5px;letter-spacing:0.2px">запись</div>
<div class="a " style="left:198px;top:500px;width:109px;height:34px;background:#8399b1;box-shadow:inset 1px 1px 0 #c2d0dc,inset -1px -1px 0 #000,inset -2px -2px 0 #52687f"></div>
<div class="a t cmd" style="left:198px;top:504px;width:104px;text-align:center;font-weight:bold;color:#000080;font-size:11.5px;letter-spacing:0.2px">Следующая</div>
<div class="a t cmd" style="left:198px;top:517px;width:104px;text-align:center;font-weight:bold;color:#000080;font-size:11.5px;letter-spacing:0.2px">запись</div>
<div class="a " style="left:334px;top:500px;width:105px;height:33px;background:#8399b1;box-shadow:inset 1px 1px 0 #c2d0dc,inset -1px -1px 0 #000,inset -2px -2px 0 #52687f"></div>
<div class="a t cmd" style="left:334px;top:504px;width:100px;text-align:center;font-weight:bold;color:#000080;font-size:11.5px;letter-spacing:0.2px">Добавить</div>
<div class="a t cmd" style="left:334px;top:517px;width:100px;text-align:center;font-weight:bold;color:#000080;font-size:11.5px;letter-spacing:0.2px">запись</div>
<div class="a " style="left:553px;top:500px;width:39px;height:38px;background:#8399b1;box-shadow:inset 1px 1px 0 #c2d0dc,inset -1px -1px 0 #000,inset -2px -2px 0 #52687f"></div>
<svg style="left:563px;top:511px" width="19" height="17"><rect x="2.5" y="1.5" width="7" height="10" fill="#fff" stroke="#000"/><path d="M1 11.5 H14" stroke="#000"/><path d="M2.5 2 L6.5 5 V15.5 L2.5 11.5 Z" fill="#808000" stroke="#000" stroke-width="0.8"/><path d="M11 6.5 L14.5 3 V5 H17.5 V8 H14.5 V10 Z" fill="#000080"/></svg>
<div class="a " style="left:316px;top:237px;width:375px;height:250px;background:#8399b1;box-shadow:inset -1px -1px 0 #000,inset 1px 1px 0 #8399b1,inset -2px -2px 0 #52687f,inset 2px 2px 0 #c2d0dc"></div>
<div class="a " style="left:320px;top:241px;width:367px;height:18px;background:#50667e"></div>
<div class="a t pt" style="left:341px;top:243px;color:#fff;font-weight:bold;font-size:11.5px;letter-spacing:0.7px;line-height:14px">Форма</div>
<svg style="left:322px;top:243px" width="17" height="14"><rect x="0.5" y="3.5" width="11" height="10" fill="#fff" stroke="#000" stroke-width="1.2"/><path d="M2.5 7 H4 M5.5 7 H9.5 M2.5 9.5 H4 M5.5 9.5 H9.5 M2.5 12 H4 M5.5 12 H9.5" stroke="#000" stroke-width="1.2"/><path d="M4 4.5 L8.5 0.8 H13.5 V5 L9 7.5 Z" fill="#b0b8c0" stroke="#606060" stroke-width="0.7"/><path d="M14.8 0 V6.5" stroke="#000080" stroke-width="1.8"/></svg>
<div class="a " style="left:320px;top:280px;width:367px;height:203px;background:#8399b1;box-shadow:inset 1px 1px 0 #c2d0dc,inset -1px -1px 0 #000,inset -2px -2px 0 #52687f"></div>
<div class="a " style="left:322px;top:262px;width:56px;height:18px;background:#8399b1"></div>
<div class="a " style="left:324px;top:262px;width:52px;height:1px;background:#c2d0dc"></div>
<div class="a " style="left:322px;top:264px;width:1px;height:16px;background:#c2d0dc"></div>
<div class="a " style="left:323px;top:263px;width:1px;height:1px;background:#c2d0dc"></div>
<div class="a t tabt" style="left:333px;top:266px;font-size:11px">Макет</div>
<div class="a " style="left:438px;top:262px;width:55px;height:18px;background:#8399b1"></div>
<div class="a " style="left:440px;top:262px;width:51px;height:1px;background:#c2d0dc"></div>
<div class="a " style="left:438px;top:264px;width:1px;height:16px;background:#c2d0dc"></div>
<div class="a " style="left:439px;top:263px;width:1px;height:1px;background:#c2d0dc"></div>
<div class="a " style="left:492px;top:264px;width:1px;height:16px;background:#000"></div>
<div class="a " style="left:491px;top:263px;width:1px;height:17px;background:#52687f"></div>
<div class="a " style="left:491px;top:263px;width:1px;height:1px;background:#000"></div>
<div class="a t tabt" style="left:442px;top:266px;font-size:11px">События</div>
<div class="a " style="left:494px;top:262px;width:55px;height:18px;background:#8399b1"></div>
<div class="a " style="left:496px;top:262px;width:51px;height:1px;background:#c2d0dc"></div>
<div class="a " style="left:494px;top:264px;width:1px;height:16px;background:#c2d0dc"></div>
<div class="a " style="left:495px;top:263px;width:1px;height:1px;background:#c2d0dc"></div>
<div class="a " style="left:548px;top:264px;width:1px;height:16px;background:#000"></div>
<div class="a " style="left:547px;top:263px;width:1px;height:17px;background:#52687f"></div>
<div class="a " style="left:547px;top:263px;width:1px;height:1px;background:#000"></div>
<div class="a t tabt" style="left:505px;top:266px;font-size:11px">Другие</div>
<div class="a " style="left:550px;top:262px;width:57px;height:18px;background:#8399b1"></div>
<div class="a " style="left:552px;top:262px;width:53px;height:1px;background:#c2d0dc"></div>
<div class="a " style="left:550px;top:264px;width:1px;height:16px;background:#c2d0dc"></div>
<div class="a " style="left:551px;top:263px;width:1px;height:1px;background:#c2d0dc"></div>
<div class="a " style="left:606px;top:264px;width:1px;height:16px;background:#000"></div>
<div class="a " style="left:605px;top:263px;width:1px;height:17px;background:#52687f"></div>
<div class="a " style="left:605px;top:263px;width:1px;height:1px;background:#000"></div>
<div class="a t tabt" style="left:569px;top:266px;font-size:11px">Все</div>
<div class="a " style="left:378px;top:260px;width:60px;height:21px;background:#8399b1"></div>
<div class="a " style="left:380px;top:260px;width:56px;height:1px;background:#c2d0dc"></div>
<div class="a " style="left:378px;top:262px;width:1px;height:19px;background:#c2d0dc"></div>
<div class="a " style="left:379px;top:261px;width:1px;height:1px;background:#c2d0dc"></div>
<div class="a " style="left:437px;top:262px;width:1px;height:19px;background:#000"></div>
<div class="a " style="left:436px;top:261px;width:1px;height:20px;background:#52687f"></div>
<div class="a " style="left:436px;top:261px;width:1px;height:1px;background:#000"></div>
<div class="a t tabt" style="left:387px;top:264px;font-size:11px">Данные</div>
<div class="a prow" style="left:331px;top:283px;width:164px;height:13px;white-space:nowrap;line-height:13px"><span class="pl">Источник записей</span><span style="letter-spacing:0.6px"> . . . . . . . . . . . . . . . . . . . . . . . . .</span></div>
<div class="a " style="left:500px;top:282px;width:163px;height:13px;background:#fff"></div>
<div class="a t pv" style="left:501px;top:283px;font-size:11px;letter-spacing:-0.1px">Справочник</div>
<div class="a prow" style="left:331px;top:298px;width:164px;height:13px;white-space:nowrap;line-height:13px"><span class="pl">Фильтр</span><span style="letter-spacing:0.6px"> . . . . . . . . . . . . . . . . . . . . . . . . .</span></div>
<div class="a " style="left:500px;top:297px;width:163px;height:13px;background:#fff"></div>
<div class="a t pv" style="left:501px;top:298px;font-size:11px;letter-spacing:-0.1px"></div>
<div class="a prow" style="left:331px;top:313px;width:164px;height:13px;white-space:nowrap;line-height:13px"><span class="pl">Порядок сортировки</span><span style="letter-spacing:0.6px"> . . . . . . . . . . . . . . . . . . . . . . . . .</span></div>
<div class="a " style="left:500px;top:312px;width:163px;height:13px;background:#fff"></div>
<div class="a t pv" style="left:501px;top:313px;font-size:11px;letter-spacing:-0.1px">Справочник.Фамилия</div>
<div class="a prow" style="left:331px;top:328px;width:164px;height:13px;white-space:nowrap;line-height:13px"><span class="pl">Применение фильтров</span><span style="letter-spacing:0.6px"> . . . . . . . . . . . . . . . . . . . . . . . . .</span></div>
<div class="a " style="left:500px;top:327px;width:163px;height:13px;background:#fff"></div>
<div class="a t pv" style="left:501px;top:328px;font-size:11px;letter-spacing:-0.1px">Да</div>
<div class="a prow" style="left:331px;top:343px;width:164px;height:13px;white-space:nowrap;line-height:13px"><span class="pl">Разрешить изменение</span><span style="letter-spacing:0.6px"> . . . . . . . . . . . . . . . . . . . . . . . . .</span></div>
<div class="a " style="left:500px;top:342px;width:163px;height:13px;background:#fff"></div>
<div class="a t pv" style="left:501px;top:343px;font-size:11px;letter-spacing:-0.1px">Да</div>
<div class="a prow" style="left:331px;top:358px;width:164px;height:13px;white-space:nowrap;line-height:13px"><span class="pl">Разрешить удаление</span><span style="letter-spacing:0.6px"> . . . . . . . . . . . . . . . . . . . . . . . . .</span></div>
<div class="a " style="left:500px;top:357px;width:163px;height:13px;background:#fff"></div>
<div class="a t pv" style="left:501px;top:358px;font-size:11px;letter-spacing:-0.1px">Да</div>
<div class="a prow" style="left:331px;top:373px;width:164px;height:13px;white-space:nowrap;line-height:13px"><span class="pl">Разрешить добавление</span><span style="letter-spacing:0.6px"> . . . . . . . . . . . . . . . . . . . . . . . . .</span></div>
<div class="a " style="left:500px;top:372px;width:163px;height:13px;background:#fff"></div>
<div class="a t pv" style="left:501px;top:373px;font-size:11px;letter-spacing:-0.1px">Да</div>
<div class="a prow" style="left:331px;top:388px;width:164px;height:13px;white-space:nowrap;line-height:13px"><span class="pl">Ввод данных</span><span style="letter-spacing:0.6px"> . . . . . . . . . . . . . . . . . . . . . . . . .</span></div>
<div class="a " style="left:500px;top:387px;width:163px;height:13px;background:#fff"></div>
<div class="a t pv" style="left:501px;top:388px;font-size:11px;letter-spacing:-0.1px">Нет</div>
<div class="a prow" style="left:331px;top:403px;width:164px;height:13px;white-space:nowrap;line-height:13px"><span class="pl">Тип набора записей</span><span style="letter-spacing:0.6px"> . . . . . . . . . . . . . . . . . . . . . . . . .</span></div>
<div class="a " style="left:500px;top:402px;width:163px;height:13px;background:#fff"></div>
<div class="a t pv" style="left:501px;top:403px;font-size:11px;letter-spacing:-0.1px">Динамический набор</div>
<div class="a prow" style="left:331px;top:418px;width:164px;height:13px;white-space:nowrap;line-height:13px"><span class="pl">Блокировка записей</span><span style="letter-spacing:0.6px"> . . . . . . . . . . . . . . . . . . . . . . . . .</span></div>
<div class="a " style="left:500px;top:417px;width:150px;height:13px;background:#fff"></div>
<div class="a " style="left:500px;top:417px;width:68px;height:13px;background:#000"></div>
<div class="a t pv" style="left:500px;top:418px;font-size:11px"><span style="background:#000;color:#fff;padding:0 1px 0 1px;letter-spacing:0.25px">Отсутствует</span></div>
<div class="a " style="left:650px;top:417px;width:13px;height:13px;background:#8399b1;box-shadow:inset 1px 1px 0 #c2d0dc,inset -1px -1px 0 #000,inset -2px -2px 0 #52687f"></div>
<svg style="left:653px;top:422px" width="7" height="4"><polygon points="0,0 7,0 3.5,3.5" fill="#000"/></svg>
<div class="a " style="left:630px;top:136px;width:154px;height:121px;background:#8399b1;box-shadow:inset -1px -1px 0 #000,inset 1px 1px 0 #8399b1,inset -2px -2px 0 #52687f,inset 2px 2px 0 #c2d0dc"></div>
<div class="a " style="left:634px;top:140px;width:145px;height:13px;background:#50667e"></div>
<div class="a t tbt" style="left:636px;top:141px;color:#fff;font-size:11px;letter-spacing:0px;line-height:14px">Панель элементов</div>
<div class="a " style="left:766px;top:141px;width:13px;height:12px;background:#8399b1;box-shadow:inset 1px 1px 0 #c2d0dc,inset -1px -1px 0 #000"></div>
<svg style="left:769px;top:143px" width="7" height="7"><path d="M0.5 0.5 L6.5 6.5 M6.5 0.5 L0.5 6.5" stroke="#000" stroke-width="1.5" fill="none"/></svg>
<div class="a " style="left:638px;top:158px;width:22px;height:22px;background:conic-gradient(#c2d0dc 25%,#8399b1 0 50%,#c2d0dc 0 75%,#8399b1 0) 0 0/2px 2px;box-shadow:inset 1px 1px 0 #52687f,inset -1px -1px 0 #c2d0dc"></div>
<div class="a " style="left:661px;top:158px;width:23px;height:22px;background:conic-gradient(#c2d0dc 25%,#8399b1 0 50%,#c2d0dc 0 75%,#8399b1 0) 0 0/2px 2px;box-shadow:inset 1px 1px 0 #52687f,inset -1px -1px 0 #c2d0dc"></div>
<svg style="left:645px;top:161px" width="10" height="17"><path d="M0.5 0.5 L0.5 13 L3.5 10 L6 15.5 L8 14.5 L5.5 9.5 L9.5 9.5 Z" fill="#fff" stroke="#000" stroke-width="1"/></svg>
<svg style="left:665px;top:161px" width="18" height="16"><path d="M7 2 L16 11" stroke="#000" stroke-width="2.2"/><path d="M7 2 L9 4" stroke="#d8c040" stroke-width="2.2"/><g fill="#a01818"><rect x="3" y="6" width="1.5" height="1.5"/><rect x="6" y="9" width="1.5" height="1.5"/><rect x="1" y="11" width="1.5" height="1.5"/><rect x="4" y="13" width="1.5" height="1.5"/><rect x="9" y="12" width="1.5" height="1.5"/></g></svg>
<div class="a " style="left:635px;top:183px;width:144px;height:1px;background:#c2d0dc"></div>
<div class="a " style="left:635px;top:182px;width:144px;height:1px;background:#52687f"></div>
<div class="a t " style="left:641px;top:190px;font-family:'Liberation Serif',serif;font-weight:bold;font-style:italic;font-size:13px;line-height:15px;letter-spacing:-0.3px">Aa</div>
<div class="a t " style="left:664px;top:190px;font-weight:bold;font-size:12px;line-height:15px;letter-spacing:-0.5px">аб</div>
<div class="a " style="left:679px;top:190px;width:1px;height:13px;background:#000"></div>
<div class="a " style="left:687px;top:192px;width:17px;height:12px;border:1px solid #000"></div>
<div class="a " style="left:691px;top:190px;width:10px;height:4px;background:#8399b1"></div>
<div class="a t " style="left:691px;top:186px;font-size:7px;line-height:8px;font-weight:bold">xyz</div>
<div class="a " style="left:713px;top:190px;width:11px;height:6px;background:#c0c0c0;box-shadow:inset 1px 1px 0 #fff,inset -1px -1px 0 #404040"></div>
<div class="a " style="left:713px;top:198px;width:11px;height:6px;background:#c0c0c0;box-shadow:inset 1px 1px 0 #fff,inset -1px -1px 0 #404040"></div>
<svg style="left:735px;top:189px" width="15" height="15"><circle cx="7.5" cy="7.5" r="6.3" fill="#fff" stroke="#404040" stroke-width="1.2"/><circle cx="7.5" cy="7.5" r="3.2" fill="#000"/></svg>
<div class="a " style="left:757px;top:190px;width:13px;height:13px;background:#fff;box-shadow:inset 1px 1px 0 #404040,inset -1px -1px 0 #d0d0d0"></div>
<svg style="left:759px;top:192px" width="10" height="9"><path d="M1 4 L3.5 7 L8.5 1" stroke="#000" stroke-width="2" fill="none"/></svg>
<svg style="left:641px;top:212px" width="16" height="14"><rect x="0.5" y="0.5" width="15" height="3" fill="none" stroke="#000"/><rect x="1.5" y="3.5" width="13" height="10" fill="none" stroke="#000"/><path d="M10.5 0.5 V13.5 M10.5 8.5 H14.5 M3 6.5 H8 M3 9.5 H8 M3 11.5 H7" stroke="#000" fill="none"/><path d="M11.5 1.5 h3 l-1.5 1.5z M11.5 7 h3 l-1.5 -2z M11.5 10 h3 l-1.5 2z" fill="#000"/></svg>
<svg style="left:665px;top:213px" width="16" height="11"><rect x="0.5" y="0.5" width="15" height="10" fill="none" stroke="#000"/><path d="M10.5 0.5 V10.5 M10.5 5.5 H15.5 M2.5 3.5 H8 M2.5 5.5 H7 M2.5 7.5 H8" stroke="#000" fill="none"/><path d="M11.5 4 h3 l-1.5 -2z M11.5 7 h3 l-1.5 2z" fill="#000"/></svg>
<div class="a " style="left:688px;top:215px;width:14px;height:8px;background:#c0c0c0;box-shadow:inset 1px 1px 0 #fff,inset -1px -1px 0 #404040"></div>
<div class="a " style="left:689px;top:223px;width:14px;height:1px;background:#404040"></div>
<svg style="left:710px;top:212px" width="16" height="14"><rect x="0.5" y="0.5" width="15" height="13" fill="#8399b1" stroke="#000"/><path d="M1.5 12.5 L5.5 7.5 L8 10 L9.5 8.5 L13.5 12.5 Z" fill="#fff" stroke="#606060" stroke-width="0.6"/><circle cx="11" cy="4" r="1.8" fill="#ffff00" stroke="#404000" stroke-width="0.5"/></svg>
<svg style="left:733px;top:212px" width="16" height="14"><rect x="0.5" y="0.5" width="15" height="13" fill="#8399b1" stroke="#000"/><path d="M5.5 2 V11 M3.5 5 V8 H5.5 M7.5 4 V7 H5.5" stroke="#008080" stroke-width="1.6" fill="none"/><circle cx="12" cy="4" r="1.8" fill="#ffff00" stroke="#404000" stroke-width="0.5"/><rect x="1" y="9" width="3" height="4" fill="#000"/><rect x="8" y="9.5" width="6" height="3" fill="none" stroke="#000" stroke-width="0.8"/></svg>
<svg style="left:756px;top:212px" width="16" height="14"><rect x="0.5" y="0.5" width="15" height="13" fill="#8399b1" stroke="#000"/><path d="M5.5 2 V11 M3.5 5 V8 H5.5 M7.5 4 V7 H5.5" stroke="#008080" stroke-width="1.6" fill="none"/><circle cx="12" cy="4" r="1.8" fill="#ffff00" stroke="#404000" stroke-width="0.5"/><rect x="1" y="9" width="3" height="4" fill="#000"/><rect x="8" y="9.5" width="6" height="3" fill="none" stroke="#000" stroke-width="0.8"/><rect x="3" y="-1" width="10" height="3" fill="#8399b1"/></svg>
<div class="a t " style="left:759px;top:208px;font-size:7px;line-height:8px;font-weight:bold;letter-spacing:0.5px">xyz</div>
<svg style="left:641px;top:234px" width="17" height="15"><path d="M3.5 0 V4.5 H15.5 V0 M3.5 1.5 H15.5 M3.5 14 V8.5 H15.5 V14 M3.5 11.5 H15.5" stroke="#000" fill="none" stroke-width="1"/><path d="M0 4.5 L2.5 6.5 L0 8.5 Z" fill="#000080"/></svg>
<svg style="left:664px;top:235px" width="17" height="14"><path d="M0.5 0.5 H9.5 V2.5 H15.5 V12.5 H0.5 Z" fill="#c0c0c0" stroke="#fff" /><path d="M0.5 13 H16 V3" stroke="#404040" fill="none"/><path d="M9.5 0.5 H14.5 L15.5 2.5" stroke="#000" fill="none"/></svg>
<svg style="left:687px;top:234px" width="15" height="13"><rect x="0.5" y="0.5" width="14" height="12" fill="#c0c0c0" stroke="#000"/><path d="M2.5 3.5 H6.5 M2.5 6.5 H6.5 M2.5 9.5 H6.5" stroke="#000" stroke-width="1.4"/><rect x="8.5" y="2.5" width="4" height="2.5" fill="none" stroke="#000"/><rect x="8.5" y="7.5" width="4" height="2.5" fill="none" stroke="#000"/></svg>
<svg style="left:712px;top:234px" width="12" height="12"><path d="M0 0.5 L11 11.5" stroke="#000" stroke-width="1.2"/></svg>
<div class="a " style="left:734px;top:236px;width:14px;height:9px;border:1px solid #000"></div>
<svg style="left:756px;top:233px" width="17" height="16"><path d="M3.5 4 L12.5 13" stroke="#000" stroke-width="2.4"/><path d="M4 4.5 L12 12.5" stroke="#c0c0c0" stroke-width="0.7"/><path d="M0.5 3.2 L1.3 0.8 L3 2.6 L4.6 2.2 L4.8 0.4 L6.6 2.4 L5.4 5.6 L2.6 5.8 Z" fill="#000"/><path d="M11.5 5.5 L3.5 13.5" stroke="#000" stroke-width="2.6"/><path d="M11.5 5.5 L3.5 13.5" stroke="#900000" stroke-width="1.2"/><path d="M6.5 2.2 L9.5 0.3 L13.5 1.2 L16 4 L16.3 6 L14.5 6.3 L12.8 3.8 L11 5.4 L8.5 3.6 Z" fill="#808020" stroke="#000" stroke-width="0.7"/></svg>
<div class="a " style="left:764px;top:247px;width:2px;height:2px;background:#000"></div>
<div class="a " style="left:767px;top:247px;width:2px;height:2px;background:#000"></div>
<div class="a " style="left:770px;top:247px;width:2px;height:2px;background:#000"></div>
<div class="a " style="left:785px;top:96px;width:13px;height:442px;background:#c1d1db"></div>
<div class="a " style="left:785px;top:96px;width:13px;height:13px;background:#8399b1;box-shadow:inset 1px 1px 0 #a9bccd,inset -1px -1px 0 #000,inset 2px 2px 0 #c2d0dc,inset -2px -2px 0 #52687f"></div>
<svg style="left:0;top:0" width="800" height="600"><polygon points="789,104 794,104 791.5,101" fill="#000"/></svg>
<div class="a " style="left:785px;top:109px;width:13px;height:82px;background:#8399b1;box-shadow:inset 1px 1px 0 #a9bccd,inset -1px -1px 0 #000,inset 2px 2px 0 #c2d0dc,inset -2px -2px 0 #52687f"></div>
<div class="a " style="left:785px;top:525px;width:13px;height:13px;background:#8399b1;box-shadow:inset 1px 1px 0 #a9bccd,inset -1px -1px 0 #000,inset 2px 2px 0 #c2d0dc,inset -2px -2px 0 #52687f"></div>
<svg style="left:0;top:0" width="800" height="600"><polygon points="789,530 794,530 791.5,533" fill="#000"/></svg>
<div class="a " style="left:2px;top:538px;width:783px;height:13px;background:#c1d1db"></div>
<div class="a " style="left:2px;top:538px;width:13px;height:13px;background:#8399b1;box-shadow:inset 0 -1px 0 #52687f,inset 1px 1px 0 #a9bccd,inset -1px 0 0 #000,inset 2px 2px 0 #c2d0dc,inset -2px 0 0 #52687f"></div>
<svg style="left:0;top:0" width="800" height="600"><polygon points="9,542 9,547 6,544.5" fill="#000"/></svg>
<div class="a " style="left:15px;top:538px;width:271px;height:13px;background:#8399b1;box-shadow:inset 0 -1px 0 #52687f,inset 1px 1px 0 #a9bccd,inset -1px 0 0 #000,inset 2px 2px 0 #c2d0dc,inset -2px 0 0 #52687f"></div>
<div class="a " style="left:772px;top:538px;width:13px;height:13px;background:#8399b1;box-shadow:inset 1px 1px 0 #a9bccd,inset -1px -1px 0 #000,inset 2px 2px 0 #c2d0dc,inset -2px -2px 0 #52687f"></div>
<svg style="left:0;top:0" width="800" height="600"><polygon points="777,542 777,547 780,544.5" fill="#000"/></svg>
<div class="a " style="left:785px;top:538px;width:15px;height:13px;background:#8399b1"></div>
<div class="a " style="left:798px;top:96px;width:2px;height:456px;background:#8399b1"></div>
<div class="a " style="left:0px;top:553px;width:800px;height:20px;background:#8399b1"></div>
<div class="a " style="left:9px;top:555px;width:552px;height:16px;box-shadow:inset 1px 1px 0 #52687f,inset -1px -1px 0 #c2d0dc"></div>
<div class="a t st" style="left:11px;top:557px;font-size:11px;letter-spacing:-0.02px">Включение и тип блокировки записей базовой таблицы или запроса</div>
<div class="a " style="left:579px;top:556px;width:31px;height:15px;box-shadow:inset 1px 1px 0 #52687f,inset -1px -1px 0 #c2d0dc"></div>
<div class="a " style="left:614px;top:556px;width:24px;height:15px;box-shadow:inset 1px 1px 0 #52687f,inset -1px -1px 0 #c2d0dc"></div>
<div class="a " style="left:642px;top:556px;width:25px;height:15px;box-shadow:inset 1px 1px 0 #52687f,inset -1px -1px 0 #c2d0dc"></div>
<div class="a " style="left:670px;top:556px;width:29px;height:15px;box-shadow:inset 1px 1px 0 #52687f,inset -1px -1px 0 #c2d0dc"></div>
<div class="a " style="left:702px;top:556px;width:26px;height:15px;box-shadow:inset 1px 1px 0 #52687f,inset -1px -1px 0 #c2d0dc"></div>
<div class="a " style="left:731px;top:556px;width:29px;height:15px;box-shadow:inset 1px 1px 0 #52687f,inset -1px -1px 0 #c2d0dc"></div>
<div class="a " style="left:764px;top:556px;width:28px;height:15px;box-shadow:inset 1px 1px 0 #52687f,inset -1px -1px 0 #c2d0dc"></div>
<div class="a t num" style="left:704px;top:558px;font-size:10.5px;letter-spacing:-0.8px">NUM</div>
<div class="a " style="left:0px;top:572px;width:800px;height:28px;background:#8399b1"></div>
<div class="a " style="left:0px;top:573px;width:800px;height:1px;background:#c2d0dc"></div>
<div class="a " style="left:2px;top:576px;width:56px;height:22px;background:#8399b1;box-shadow:inset 1px 1px 0 #c2d0dc,inset -1px -1px 0 #000,inset -2px -2px 0 #52687f"></div>
<div class="a t start" style="left:25px;top:581px;font-weight:bold;font-size:12px;letter-spacing:0.1px;-webkit-text-stroke:0.3px #000">Пуск</div>
<svg style="left:6px;top:580px" width="17" height="15"><g fill="#000"><rect x="0" y="3" width="1.5" height="1.5"/><rect x="0" y="6" width="1.5" height="1.5"/><rect x="0" y="9" width="1.5" height="1.5"/></g><g><rect x="2" y="3" width="2" height="2" fill="#e02020"/><rect x="2" y="6" width="2" height="1.5" fill="#e02020"/><rect x="2" y="8.5" width="2" height="2" fill="#2040e0"/><rect x="2" y="11" width="2" height="1.5" fill="#2040e0"/></g><path d="M5 2.5 Q8 0.5 10.5 2 Q13 3.5 16 1.5 V13 Q13 15 10.5 13.5 Q8 12 5 14 Z" fill="#000"/><path d="M6.2 3.6 Q8 2.5 10 3.5 V7.3 Q8 6.3 6.2 7.3 Z" fill="#e02020"/><path d="M11 3.8 Q13 4.8 14.8 3.7 V7.5 Q13 8.6 11 7.6 Z" fill="#20c020"/><path d="M6.2 8.4 Q8 7.4 10 8.4 V12.2 Q8 11.2 6.2 12.4 Z" fill="#2040e0"/><path d="M11 8.7 Q13 9.7 14.8 8.6 V12.3 Q13 13.4 11 12.4 Z" fill="#f0e020"/></svg>
<div class="a " style="left:64px;top:578px;width:1px;height:18px;background:#c2d0dc"></div>
<div class="a " style="left:65px;top:578px;width:1px;height:18px;background:#8399b1"></div>
<div class="a " style="left:66px;top:578px;width:1px;height:18px;background:#52687f"></div>
<div class="a " style="left:200px;top:578px;width:1px;height:18px;background:#c2d0dc"></div>
<div class="a " style="left:201px;top:578px;width:1px;height:18px;background:#8399b1"></div>
<div class="a " style="left:202px;top:578px;width:1px;height:18px;background:#52687f"></div>
<svg style="left:74px;top:578px" width="17" height="18"><path d="M0.5 10 L8 3 L15.5 6.5 L8 14.5 Z" fill="#f0f0f0" stroke="#606060" stroke-width="0.8"/><path d="M1 11.5 L8 16 L15.5 8" fill="none" stroke="#909090" stroke-width="1"/><path d="M13.5 0.5 L4 9 L8 9.5 L2.5 17.5 L14 7.5 L9.5 7 Z" fill="#f8a818" stroke="#a05000" stroke-width="0.7"/></svg>
<svg style="left:97px;top:578px" width="17" height="18"><rect x="1" y="5.5" width="14.5" height="8.5" fill="#f8f4c8" stroke="#505050" stroke-width="0.8"/><rect x="11.5" y="7" width="2.5" height="2.5" fill="#e01828"/><path d="M3 9.5 H9 M3 11.5 H8" stroke="#a0a080" stroke-width="0.8"/><path d="M2 6 Q3 1.5 9 2 L9 0 L13 3.2 L9 6 L9 4.2 Q5 4 4.5 6 Z" fill="#2858e0" stroke="#102880" stroke-width="0.4"/><path d="M14.5 13.5 Q13 17.5 7.5 16.5 L7.5 18 L3.5 15 L7.5 12.5 L7.5 14.3 Q11 15 12 13.5 Z" fill="#2858e0" stroke="#102880" stroke-width="0.4"/></svg>
<svg style="left:120px;top:578px" width="18" height="18"><text x="1.5" y="15.5" font-family="Liberation Sans,sans-serif" font-weight="bold" font-size="20" fill="#1850d0" stroke="#1040b0" stroke-width="0.6">e</text><path d="M2 9.5 Q6 2 14.5 2.5" stroke="#58a0f0" stroke-width="1.6" fill="none"/><path d="M1.5 12 Q0 17 5 15.5" stroke="#1850d0" stroke-width="1.4" fill="none"/><path d="M13 2.5 Q17 1 15.5 6" stroke="#1850d0" stroke-width="1.4" fill="none"/></svg>
<svg style="left:142px;top:579px" width="18" height="17"><rect x="1.5" y="2.5" width="14" height="13" fill="#3890c8" stroke="#103858" stroke-width="0.9"/><path d="M3 11 L8.5 5.5 L13.5 8 L8.5 14 Z" fill="#f8f4d8" stroke="#505050" stroke-width="0.7"/><path d="M8 9.5 L14.5 0.5 L16.5 2 L10 10.5 L7.5 11.5 Z" fill="#e8b848" stroke="#604000" stroke-width="0.6"/><path d="M14.5 0.5 L16.5 2" stroke="#e02020" stroke-width="1.5"/><rect x="2.5" y="3.5" width="2" height="2" fill="#a0d8f8"/><rect x="12.5" y="12.5" width="2" height="2" fill="#a0d8f8"/></svg>
<svg style="left:166px;top:578px" width="17" height="18"><path d="M0.5 1.5 L5 1.5 L9.5 8 L7.5 11.5 Z" fill="#18d0e0" stroke="#004048" stroke-width="0.7"/><path d="M3 1.5 L16 1.5 L14 5 L5.5 5 Z" fill="#f0e818" stroke="#404000" stroke-width="0.7"/><path d="M12 1.5 L16.5 1.5 L8 16.5 L4.5 16.5 L4.5 14 L6.5 14 L11 5 Z" fill="#20d038" stroke="#004010" stroke-width="0.7"/></svg>
<div class="a " style="left:208px;top:576px;width:113px;height:22px;background:#8399b1;box-shadow:inset 1px 1px 0 #c2d0dc,inset -1px -1px 0 #000,inset -2px -2px 0 #52687f"></div>
<svg style="left:212px;top:580px" width="16" height="14"><path d="M0.5 2.5 L2 0.5 L6 0.5 L7.5 2.5 L14.5 2.5 L14.5 12.5 L0.5 12.5 Z" fill="#f0e060" stroke="#504000" stroke-width="0.8"/><path d="M0.5 12.5 L3 5.5 L15.5 5.5 L14.5 12.5 Z" fill="#fff8a0" stroke="#504000" stroke-width="0.8"/></svg>
<div class="a t tk" style="left:231px;top:580px;font-size:11px;letter-spacing:-0.05px;transform:scaleY(1.12);transform-origin:0 0">C:\Мои докуме...</div>
<div class="a " style="left:325px;top:576px;width:113px;height:22px;background:#8399b1;box-shadow:inset 1px 1px 0 #c2d0dc,inset -1px -1px 0 #000,inset -2px -2px 0 #52687f"></div>
<svg style="left:329px;top:578px" width="16" height="17"><path d="M4.5 0.5 H12 L15.5 4 V16.5 H4.5 Z" fill="#fff" stroke="#404040" stroke-width="0.8"/><path d="M12 0.5 V4 H15.5" fill="none" stroke="#404040" stroke-width="0.8"/><rect x="0.5" y="2.5" width="10" height="9" fill="#2030c0" stroke="#101060" stroke-width="0.6"/><text x="1.2" y="10.3" font-family="Liberation Sans,sans-serif" font-weight="bold" font-size="9" fill="#fff">W</text></svg>
<div class="a t tk" style="left:348px;top:580px;font-size:11px;letter-spacing:-0.1px;transform:scaleY(1.12);transform-origin:0 0">курсовая.doc - ...</div>
<div class="a " style="left:442px;top:576px;width:113px;height:22px;background:#8399b1;box-shadow:inset 1px 1px 0 #c2d0dc,inset -1px -1px 0 #000,inset -2px -2px 0 #52687f"></div>
<svg style="left:445px;top:578px" width="16" height="17"><path d="M4.5 0.5 H12 L15.5 4 V16.5 H4.5 Z" fill="#fff" stroke="#404040" stroke-width="0.8"/><path d="M12 0.5 V4 H15.5" fill="none" stroke="#404040" stroke-width="0.8"/><rect x="0.5" y="2.5" width="10" height="9" fill="#2030c0" stroke="#101060" stroke-width="0.6"/><text x="1.2" y="10.3" font-family="Liberation Sans,sans-serif" font-weight="bold" font-size="9" fill="#fff">W</text></svg>
<div class="a t tk" style="left:464px;top:580px;font-size:11px;letter-spacing:-0.3px;transform:scaleY(1.12);transform-origin:0 0">ACCESS.doc - M...</div>
<div class="a " style="left:559px;top:576px;width:113px;height:22px;background:#c1d1db;box-shadow:inset 1px 1px 0 #000,inset -1px -1px 0 #c2d0dc,inset 2px 2px 0 #52687f"></div>
<svg style="left:563px;top:579px" width="17" height="16" viewBox="0 0 17 16"><path d="M3 1 Q6.5 -0.5 8.5 2 Q10 4 9 6 L16 12 L15.5 15 L13 15 L12.5 13 L11 13 L10.5 11 L9 11 L6.5 8.5 Q3 10 1 7 Q-0.5 3.5 3 1 Z" fill="#f8f010" stroke="#101000" stroke-width="1"/><circle cx="3.8" cy="4.3" r="1.3" fill="#909090" stroke="#202000" stroke-width="0.7"/><path d="M8.5 7 L14.5 12.5" stroke="#fff8a0" stroke-width="0.8"/></svg>
<div class="a t tk" style="left:582px;top:581px;font-size:11px;font-weight:bold;letter-spacing:0.3px;-webkit-text-stroke:0.25px #000;transform:scaleY(1.12);transform-origin:0 0">Microsoft Ac...</div>
<div class="a " style="left:685px;top:576px;width:114px;height:22px;box-shadow:inset 1px 1px 0 #52687f,inset -1px -1px 0 #c2d0dc"></div>
<div class="a " style="left:688px;top:579px;width:16px;height:16px;background:#808080"></div>
<div class="a t ru" style="left:690px;top:580px;color:#e8eef4;font-size:11px">Ru</div>
<svg style="left:705px;top:578px" width="17" height="17"><path d="M1 6 H4 L9 1.5 V15.5 L4 11 H1 Z" fill="#e8e060" stroke="#404000" stroke-width="0.8"/><path d="M11 5 L14 3 M11.5 8.5 H15 M11 12 L14 14" stroke="#a0a0a0" stroke-width="0.9"/></svg>
<svg style="left:723px;top:578px" width="16" height="17"><path d="M1 1.5 L4 2.5 L7.5 0.5 L11 2.5 L14 1.5 Q15.5 11 7.5 16 Q-0.5 11 1 1.5 Z" fill="#189098" stroke="#003038" stroke-width="0.9"/><path d="M3.5 3.5 L7.5 2.5 L11.5 3.5 Q12 10 7.5 13.5 Q3 10 3.5 3.5Z" fill="#fff"/><text x="4.3" y="11" font-family="Liberation Sans,sans-serif" font-weight="bold" font-size="8.5" fill="#1838c0">N</text></svg>
<svg style="left:740px;top:578px" width="17" height="17"><circle cx="8" cy="8.5" r="7.5" fill="#e8e8e8" stroke="#404040" stroke-width="0.8"/><path d="M2 13 L5.5 4 L9 13 Z M8 13 L11 5.5 L14 13 Z" fill="#108030"/><path d="M1.5 13 H14.5" stroke="#604020" stroke-width="1"/></svg>
<div class="a t clk" style="left:764px;top:580px;font-size:11px;letter-spacing:-0.2px;transform:scaleY(1.12);transform-origin:0 0">11:51</div>
</body></html>
